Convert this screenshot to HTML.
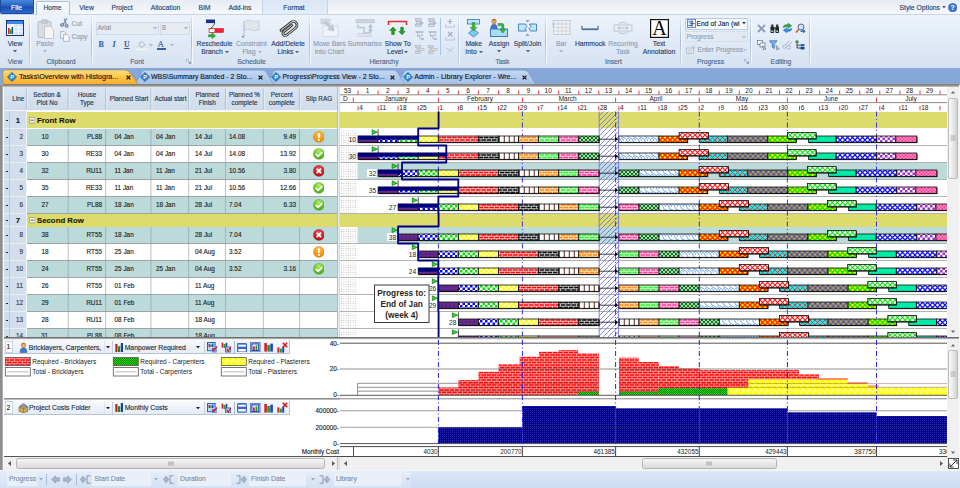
<!DOCTYPE html>
<html><head><meta charset="utf-8"><title>Tasks</title>
<style>
*{box-sizing:border-box;margin:0;padding:0}
html,body{width:960px;height:488px;overflow:hidden;background:#d5e3f5}
body{position:relative;font-family:"Liberation Sans",sans-serif;font-size:6.8px;color:#263f68}
.a{position:absolute}
.t{position:absolute;white-space:nowrap;line-height:10px;-webkit-text-stroke:.13px currentColor}
.c{text-align:center;transform:translateX(-50%)}
.g{color:#8d9db3}
#tabrow{left:0;top:0;width:960px;height:14px;background:linear-gradient(#e7ecf4,#eef2f8 50%,#f6f8fc)}
#ribbon{left:0;top:14px;width:960px;height:54.5px;background:linear-gradient(#edf3fb 0%,#e2ebf7 45%,#d6e2f2 100%);border-top:1px solid #c6d5e9;border-bottom:1.5px solid #b4c6e0}
.sep{position:absolute;top:17px;width:1px;height:47px;background:linear-gradient(rgba(160,180,210,.2),#a9bcd8 50%,rgba(160,180,210,.3));box-shadow:1px 0 0 rgba(255,255,255,.7)}
.gl{-webkit-text-stroke:.13px currentColor;position:absolute;top:56.5px;color:#4b6486;font-size:6.8px;line-height:10px;transform:translateX(-50%);white-space:nowrap}
.bl{position:absolute;font-size:6.8px;line-height:8px;text-align:center;transform:translateX(-50%);white-space:nowrap;color:#1e395b}
#docs{left:0;top:68px;width:960px;height:17px;background:#86a7d8}
.tb{font-size:6.4px;color:#222}
</style></head>
<body>
<div id="tabrow" class="a"></div>
<div id="ribbon" class="a"></div>
<div class="a" style="left:0;top:0;width:34px;height:14px;background:linear-gradient(#4a86dc,#2561c6 45%,#1b50b0 55%,#2c68cc);border:1px solid #1c4a9c;border-top:0;border-radius:0 0 2px 2px"></div>
<div class="t c " style="left:16.5px;top:2.5px;color:#fff">File</div>
<div class="a" style="left:36px;top:1px;width:34px;height:14px;background:linear-gradient(#fafcfe,#e9f0f9);border:1px solid #a9bfdc;border-bottom:0;border-radius:2px 2px 0 0"></div>
<div class="t c " style="left:52.5px;top:2.7px;">Home</div>
<div class="t c " style="left:86.5px;top:2.7px;">View</div>
<div class="t c " style="left:122px;top:2.7px;">Project</div>
<div class="t c " style="left:165.5px;top:2.7px;">Allocation</div>
<div class="t c " style="left:204.5px;top:2.7px;">BIM</div>
<div class="t c " style="left:240px;top:2.7px;">Add-ins</div>
<div class="a" style="left:262px;top:0;width:66px;height:14px;background:linear-gradient(#d9e6f6,#e4edf8);border-left:1px solid #c3d3e8;border-right:1px solid #c3d3e8"></div>
<div class="t c " style="left:294px;top:2.7px;">Format</div>
<div class="t " style="left:899.5px;top:2.9000000000000004px;">Style Options</div>
<svg class="a" style="left:942px;top:6.0px" width="4" height="2.4" viewBox="0 0 4 2.4"><path d="M0 0H4L2 2.4Z" fill="#4b6486"/></svg>
<svg class="a" style="left:948px;top:2.5px" width="9.4" height="9.4" viewBox="0 0 9.4 9.4"><circle cx="4.7" cy="4.7" r="4.1" fill="#3a78d8" stroke="#1b4a9a" stroke-width=".6"/><text x="4.7" y="7.3" font-size="7" font-weight="bold" font-family="Liberation Sans,sans-serif" fill="#fff" text-anchor="middle">?</text></svg>
<div class="sep" style="left:29px"></div>
<div class="sep" style="left:91px"></div>
<div class="sep" style="left:191px"></div>
<div class="sep" style="left:308.5px"></div>
<div class="sep" style="left:457.5px"></div>
<div class="sep" style="left:545px"></div>
<div class="sep" style="left:680px"></div>
<div class="sep" style="left:749.5px"></div>
<div class="sep" style="left:809px"></div>
<div class="gl" style="left:15px">View</div>
<div class="gl" style="left:61px">Clipboard</div>
<div class="gl" style="left:137px">Font</div>
<div class="gl" style="left:251.5px">Schedule</div>
<div class="gl" style="left:384px">Hierarchy</div>
<div class="gl" style="left:502.5px">Task</div>
<div class="gl" style="left:613.5px">Insert</div>
<div class="gl" style="left:710.5px">Progress</div>
<div class="gl" style="left:781px">Editing</div>
<svg class="a" style="left:185.5px;top:59px" width="5" height="5" viewBox="0 0 5 5"><path d="M0 0H3M0 0V3M2 2L4.5 4.5M4.5 2.5V4.5H2.5" stroke="#7f93b0" fill="none" stroke-width=".8"/></svg>
<svg class="a" style="left:743.5px;top:59px" width="5" height="5" viewBox="0 0 5 5"><path d="M0 0H3M0 0V3M2 2L4.5 4.5M4.5 2.5V4.5H2.5" stroke="#7f93b0" fill="none" stroke-width=".8"/></svg>
<svg class="a" style="left:6px;top:20px" width="18" height="16" viewBox="0 0 18 16"><rect x=".5" y=".5" width="17" height="15" fill="#fff" stroke="#1e2f80"/><rect x="1" y="1" width="16" height="3" fill="#3a8ae8"/><rect x="1" y="4" width="7" height="11" fill="#f4f8ff"/><rect x="2" y="8" width="1.7" height="6" fill="#d22"/><rect x="3.9" y="9.5" width="1.7" height="4.5" fill="#2a2"/><rect x="5.6" y="7" width="1.6" height="7" fill="#2448b0"/><rect x="8" y="4" width="9" height="11" fill="#cfe4fb"/><path d="M8 4V15M8 7.5H17M8 11H17M12.5 4V15" stroke="#fff" stroke-width=".8"/></svg>
<div class="t c " style="left:15px;top:38.9px;">View</div>
<svg class="a" style="left:13px;top:50.3px" width="4" height="2.4" viewBox="0 0 4 2.4"><path d="M0 0H4L2 2.4Z" fill="#4b6486"/></svg>
<svg class="a" style="left:37px;top:19px" width="18" height="20" viewBox="0 0 18 20"><rect x="1" y="2.5" width="13" height="16" rx="1" fill="#d9dde3" stroke="#b7bcc6"/><rect x="4.5" y=".8" width="6" height="3.5" rx="1" fill="#c9ced6" stroke="#aab0bb" stroke-width=".6"/><path d="M7.5 7.5H13.5L16.5 10.5V19.5H7.5Z" fill="#f4f5f7" stroke="#b9bec8" stroke-width=".8"/></svg>
<div class="t c g" style="left:45px;top:38.9px;">Paste</div>
<svg class="a" style="left:43px;top:50.3px" width="4" height="2.4" viewBox="0 0 4 2.4"><path d="M0 0H4L2 2.4Z" fill="#a9b6c8"/></svg>
<svg class="a" style="left:60px;top:18px" width="9" height="10" viewBox="0 0 9 10"><path d="M7 .3L3.2 6.2M4.2 .6L6.2 6" stroke="#8094b4" stroke-width="1.3" fill="none"/><ellipse cx="2.2" cy="7" rx="1.7" ry="1.4" fill="#a9b8d0" stroke="#5f7aa8" stroke-width=".9"/><ellipse cx="6.6" cy="7.8" rx="1.5" ry="1.6" fill="#a9b8d0" stroke="#5f7aa8" stroke-width=".9"/></svg>
<div class="t g" style="left:71.5px;top:18.5px;">Cut</div>
<svg class="a" style="left:60px;top:31px" width="10" height="11" viewBox="0 0 10 11"><path d="M.6 .6H4.2L6 2.4V7.4H.6Z" fill="#f2f4f8" stroke="#9aa7ba" stroke-width=".8"/><path d="M3.6 3.6H7.2L9.2 5.6V10.4H3.6Z" fill="#f8f9fb" stroke="#9aa7ba" stroke-width=".8"/></svg>
<div class="t g" style="left:71.5px;top:31.700000000000003px;">Copy</div>
<div class="a" style="left:95.5px;top:22px;width:63px;height:12.5px;background:#e6ebf2;border:1px solid #d0dbea"></div>
<div class="a" style="left:160px;top:22px;width:29.5px;height:12.5px;background:#e6ebf2;border:1px solid #d0dbea"></div>
<div class="t g" style="left:97.5px;top:23.3px;color:#8a96a8">Arial</div>
<svg class="a" style="left:153px;top:27.3px" width="4" height="2.4" viewBox="0 0 4 2.4"><path d="M0 0H4L2 2.4Z" fill="#a9b6c8"/></svg>
<div class="t g" style="left:162px;top:23.3px;color:#8a96a8">8</div>
<svg class="a" style="left:183.5px;top:27.3px" width="4" height="2.4" viewBox="0 0 4 2.4"><path d="M0 0H4L2 2.4Z" fill="#a9b6c8"/></svg>
<div class="t " style="left:98.5px;top:40px;font-family:'Liberation Serif',serif;font-weight:bold;font-size:8px;color:#3f5f93">B</div>
<div class="t " style="left:112.5px;top:40px;font-family:'Liberation Serif',serif;font-style:italic;font-weight:bold;font-size:8px;color:#3f5f93">I</div>
<div class="t " style="left:124px;top:40px;font-family:'Liberation Serif',serif;font-weight:bold;font-size:7.6px;color:#3f5f93;text-decoration:underline">U</div>
<svg class="a" style="left:136px;top:40px" width="11" height="10" viewBox="0 0 11 10"><path d="M3 3.5L6 1.5L9 5L5 7.5Z" fill="#e8ecf2" stroke="#9aa9c0" stroke-width=".8"/><path d="M2 5.5Q1 7 2 7.5Q3 7 2 5.5" fill="#a9b6c8"/><rect x=".5" y="8.6" width="10" height="1.4" fill="#f7f7f2"/></svg>
<svg class="a" style="left:149px;top:44.3px" width="4" height="2.4" viewBox="0 0 4 2.4"><path d="M0 0H4L2 2.4Z" fill="#a9b6c8"/></svg>
<div class="t " style="left:157.5px;top:39.2px;font-family:'Liberation Serif',serif;font-size:9px;color:#3f5f93">A</div>
<div class="a" style="left:156.5px;top:48.2px;width:9.5px;height:1.6px;background:#3a5ea8"></div>
<svg class="a" style="left:169.5px;top:44.3px" width="4" height="2.4" viewBox="0 0 4 2.4"><path d="M0 0H4L2 2.4Z" fill="#a9b6c8"/></svg>
<svg class="a" style="left:205px;top:18px" width="21" height="21" viewBox="0 0 21 21"><rect x="1" y="1.5" width="9" height="3.6" fill="#1a2f8f"/><path d="M9.5 3.2V6L4.5 12.5" stroke="#333" stroke-width=".8" fill="none"/><rect x="4" y="10.5" width="14.5" height="4" fill="#e23" stroke="#b11" stroke-width=".5"/><rect x="4.5" y="11" width="5" height="3" fill="#fff"/><path d="M3.5 16.8H7V15L10.5 17.8L7 20.6V18.8H3.5Z" fill="#2bb32b" stroke="#187a18" stroke-width=".5"/></svg>
<div class="t c " style="left:214.5px;top:38.9px;">Reschedule</div>
<div class="t c " style="left:212px;top:47.0px;">Branch</div>
<svg class="a" style="left:224.5px;top:50.8px" width="4" height="2.4" viewBox="0 0 4 2.4"><path d="M0 0H4L2 2.4Z" fill="#4b6486"/></svg>
<svg class="a" style="left:241px;top:18px" width="22" height="21" viewBox="0 0 22 21"><path d="M3 19.5V3" stroke="#b9c0cc" stroke-width="1.2"/><path d="M3.5 3.5Q7 1 10.5 3Q14 5 18 2.5V11.5Q14 14 10.5 12Q7 10 3.5 12.5Z" fill="#e3e6eb" stroke="#c3c9d3" stroke-width=".8"/><rect x="1" y="18" width="1.4" height="1.4" fill="#5570a0"/></svg>
<div class="t c g" style="left:251.5px;top:38.9px;">Constraint</div>
<div class="t c g" style="left:249px;top:47.0px;">Flag</div>
<svg class="a" style="left:257.5px;top:50.8px" width="4" height="2.4" viewBox="0 0 4 2.4"><path d="M0 0H4L2 2.4Z" fill="#a9b6c8"/></svg>
<svg class="a" style="left:277px;top:17px" width="22" height="22" viewBox="0 0 22 22"><g transform="rotate(-38 11 11)" fill="none" stroke-linecap="round"><path d="M4 8.5H17A3.6 3.6 0 0 1 17 15.7H5.5A2.2 2.2 0 0 1 5.5 11.3H15.5" stroke="#222" stroke-width="2.6"/><path d="M4 8.5H17A3.6 3.6 0 0 1 17 15.7H5.5A2.2 2.2 0 0 1 5.5 11.3H15.5" stroke="#d8d8d8" stroke-width="1"/></g></svg>
<div class="t c " style="left:288px;top:38.9px;">Add/Delete</div>
<div class="t c " style="left:285.5px;top:47.0px;">Links</div>
<svg class="a" style="left:295px;top:50.8px" width="4" height="2.4" viewBox="0 0 4 2.4"><path d="M0 0H4L2 2.4Z" fill="#4b6486"/></svg>
<svg class="a" style="left:320px;top:18px" width="20" height="20" viewBox="0 0 20 20"><rect x="3" y="8" width="15" height="10.5" fill="#f1f3f6" stroke="#cfd5de" stroke-width=".8"/><rect x="1" y="1" width="9" height="5" fill="#d5dae2" stroke="#c2c8d2" stroke-width=".6"/><path d="M4 5L9.5 9.5L7.5 11.5L14 13L12.5 6.5L10.8 8.2L6 3.5Z" fill="#c5cbd6" stroke="#aeb6c3" stroke-width=".6"/></svg>
<div class="t c g" style="left:329.5px;top:38.9px;">Move Bars</div>
<div class="t c g" style="left:329.5px;top:47.0px;">into Chart</div>
<svg class="a" style="left:355px;top:18px" width="21" height="20" viewBox="0 0 21 20"><rect x="1" y="1.5" width="18.5" height="3.4" fill="#cdd3dd" stroke="#b9c1cd" stroke-width=".6"/><path d="M3 6.5V9.5H9V15H15" stroke="#b9c1cd" stroke-width="1.3" fill="none"/><rect x="3" y="15.5" width="13" height="3" fill="#dfe3ea" stroke="#c5ccd7" stroke-width=".6"/><path d="M15.5 6L17.8 9.2H16.4V11.8H17.8L15.5 15L13.2 11.8H14.6V9.2H13.2Z" fill="#b3bccb"/></svg>
<div class="t c g" style="left:365px;top:38.9px;">Summarise</div>
<svg class="a" style="left:387px;top:19px" width="21" height="18" viewBox="0 0 21 18"><path d="M1.5 6V2.5H19.5V6" stroke="#e03030" stroke-width="1.6" fill="none"/><path d="M6 8L9.2 11.4H7.3V15.5H4.7V11.4H2.8Z" fill="#1fa01f" stroke="#0f700f" stroke-width=".5"/><path d="M15 15.8L11.8 12.4H13.7V8.3H16.3V12.4H18.2Z" fill="#1fa01f" stroke="#0f700f" stroke-width=".5"/></svg>
<div class="t c " style="left:397.7px;top:38.9px;">Show To</div>
<div class="t c " style="left:395px;top:47.0px;">Level</div>
<svg class="a" style="left:403.5px;top:50.8px" width="4" height="2.4" viewBox="0 0 4 2.4"><path d="M0 0H4L2 2.4Z" fill="#4b6486"/></svg>
<svg class="a" style="left:414.5px;top:18.3px" width="10" height="9" viewBox="0 0 10 9"><rect x=".5" y=".4" width="6" height="2" fill="#d6dbe4" stroke="#a3afc2" stroke-width=".6"/><rect x="1.2" y="3.4" width="5" height="2" fill="#d6dbe4" stroke="#a3afc2" stroke-width=".6"/><rect x=".5" y="6.4" width="6" height="2" fill="#d6dbe4" stroke="#a3afc2" stroke-width=".6"/><path d="M5.5 3L8.8 5L5.5 7Z" fill="#a9b4c6"/></svg>
<svg class="a" style="left:427.8px;top:18.3px" width="10" height="9" viewBox="0 0 10 9"><rect x=".5" y=".4" width="6" height="2" fill="#d6dbe4" stroke="#a3afc2" stroke-width=".6"/><rect x="1.2" y="3.4" width="5" height="2" fill="#d6dbe4" stroke="#a3afc2" stroke-width=".6"/><rect x=".5" y="6.4" width="6" height="2" fill="#d6dbe4" stroke="#a3afc2" stroke-width=".6"/><path d="M5.5 3L8.8 5L5.5 7Z" fill="#a9b4c6"/></svg>
<svg class="a" style="left:414.5px;top:31.1px" width="10" height="9" viewBox="0 0 10 9"><path d="M.5 1H8.5M2 4.8H5M5.5 8H9" stroke="#a9b4c6" stroke-width="1.4" fill="none"/><path d="M2.5 1.5V4.5M5 5V8" stroke="#a9b4c6" stroke-width=".8"/><path d="M6.5 2L8.5 4.5L6 5.5Z" fill="#b4bed0"/></svg>
<svg class="a" style="left:427.8px;top:31.1px" width="10" height="9" viewBox="0 0 10 9"><path d="M.5 1H8.5M2 4.8H5M5.5 8H9" stroke="#a9b4c6" stroke-width="1.4" fill="none"/><path d="M2.5 1.5V4.5M5 5V8" stroke="#a9b4c6" stroke-width=".8"/><path d="M6.5 2L8.5 4.5L6 5.5Z" fill="#b4bed0"/></svg>
<svg class="a" style="left:414.5px;top:44.7px" width="10" height="9" viewBox="0 0 10 9"><rect x=".5" y=".4" width="5" height="2" fill="#d6dbe4" stroke="#a3afc2" stroke-width=".6"/><rect x="3.5" y="3.4" width="5.5" height="2" fill="#e4e2d4" stroke="#b0b4b8" stroke-width=".6"/><rect x=".5" y="6.4" width="5" height="2" fill="#d6dbe4" stroke="#a3afc2" stroke-width=".6"/><path d="M2 2.5V6.4" stroke="#a3afc2" stroke-width=".8"/></svg>
<svg class="a" style="left:427.8px;top:44.7px" width="10" height="9" viewBox="0 0 10 9"><rect x=".5" y=".4" width="5" height="2" fill="#d6dbe4" stroke="#a3afc2" stroke-width=".6"/><rect x="3.5" y="3.4" width="5.5" height="2" fill="#e4e2d4" stroke="#b0b4b8" stroke-width=".6"/><rect x=".5" y="6.4" width="5" height="2" fill="#d6dbe4" stroke="#a3afc2" stroke-width=".6"/><path d="M2 2.5V6.4" stroke="#a3afc2" stroke-width=".8"/></svg>
<div class="a" style="left:440px;top:18px;width:1px;height:36.5px;background:#a9c4ee"></div>
<svg class="a" style="left:445px;top:18px" width="10" height="10" viewBox="0 0 10 10"><path d="M.5 6.5V9H9.5V6.5" stroke="#b2bccb" fill="none" stroke-width=".9"/><path d="M5 1V6M2.5 3.5H7.5" stroke="#9fb0c8" stroke-width="1.2"/></svg>
<svg class="a" style="left:445px;top:31px" width="10" height="10" viewBox="0 0 10 10"><path d="M.5 6.5V9H9.5V6.5" stroke="#b2bccb" fill="none" stroke-width=".9"/><path d="M3 1L7.5 5.5M7.5 1L3 5.5" stroke="#9fb0c8" stroke-width="1.2"/></svg>
<svg class="a" style="left:445px;top:46px" width="10" height="8" viewBox="0 0 10 8"><path d="M1 2L5 4L9 1.5M3 6.5L5 4L8 6.5" stroke="#c2cad6" fill="none" stroke-width="1"/></svg>
<svg class="a" style="left:464px;top:18px" width="20" height="20" viewBox="0 0 20 20"><rect x="3.5" y="1.5" width="12" height="4.5" fill="#bfe6f7" stroke="#3b78c0" stroke-width=".8"/><path d="M9.5 11L14.5 15L9.5 19L4.5 15Z" fill="#7ecbf0" stroke="#3b78c0" stroke-width=".8"/><path d="M8.2 4.5H10.8V9.5H12.8L9.5 13L6.2 9.5H8.2Z" fill="#38b838" stroke="#1a7a1a" stroke-width=".5"/></svg>
<div class="t c " style="left:473.7px;top:38.9px;">Make</div>
<div class="t c " style="left:471px;top:47.0px;">Into</div>
<svg class="a" style="left:478.5px;top:50.8px" width="4" height="2.4" viewBox="0 0 4 2.4"><path d="M0 0H4L2 2.4Z" fill="#4b6486"/></svg>
<svg class="a" style="left:489px;top:18px" width="20" height="20" viewBox="0 0 20 20"><rect x="1.5" y="11" width="17" height="7.5" fill="#a8dcf5" stroke="#2f6cb8" stroke-width=".9"/><circle cx="5" cy="3.4" r="2.3" fill="#e8a45a" stroke="#a8641e" stroke-width=".5"/><path d="M2.5 2.6Q5 -.5 7.5 2.6Q5 1.5 2.5 2.6" fill="#a85a14"/><path d="M1.8 10.5Q1.8 6.2 5 6.2Q8.2 6.2 8.2 10.5Z" fill="#3d78c8" stroke="#2a55a0" stroke-width=".5"/><path d="M9 5.5H13.2Q14.8 5.5 14.8 7.2V11.5H16.6L13.8 15L11 11.5H12.8V7.6H9Z" fill="#38b838" stroke="#1a7a1a" stroke-width=".5"/></svg>
<div class="t c " style="left:499px;top:38.9px;">Assign</div>
<svg class="a" style="left:497px;top:50.3px" width="4" height="2.4" viewBox="0 0 4 2.4"><path d="M0 0H4L2 2.4Z" fill="#4b6486"/></svg>
<svg class="a" style="left:517px;top:19px" width="21" height="18" viewBox="0 0 21 18"><path d="M1.5 5H8.5L10 7.5L8 9.5L9.5 12H1.5Z" fill="#bfe6f7" stroke="#2f6cb8" stroke-width=".8"/><path d="M12.5 5H19.5V12H13.5L12 9.5L14 7.5Z" fill="#bfe6f7" stroke="#2f6cb8" stroke-width=".8"/><path d="M8.3 1H12.7L10.5 3.8Z" fill="#9aa6b8"/><path d="M8.3 17H12.7L10.5 14.2Z" fill="#9aa6b8"/></svg>
<div class="t c " style="left:527.5px;top:38.9px;">Split/Join</div>
<svg class="a" style="left:525.5px;top:50.3px" width="4" height="2.4" viewBox="0 0 4 2.4"><path d="M0 0H4L2 2.4Z" fill="#4b6486"/></svg>
<svg class="a" style="left:552px;top:19px" width="19" height="17" viewBox="0 0 19 17"><rect x="1.5" y="1.5" width="16.5" height="14" fill="#f1f2f5" stroke="#bcc3cf" stroke-width=".8"/><path d="M1.5 5H18M1.5 8.5H18M1.5 12H18M6 1.5V15.5M10 1.5V15.5M14 1.5V15.5" stroke="#c6ccd6" stroke-width=".7"/><path d="M.5 3L3.5 5.5L.5 8Z" fill="#c0c7d2"/></svg>
<div class="t c g" style="left:561.2px;top:38.9px;">Bar</div>
<svg class="a" style="left:559.2px;top:50.3px" width="4" height="2.4" viewBox="0 0 4 2.4"><path d="M0 0H4L2 2.4Z" fill="#a9b6c8"/></svg>
<svg class="a" style="left:581px;top:24px" width="18" height="8" viewBox="0 0 18 8"><path d="M1 1.8V5.6H17V1.8" stroke="#2c4a72" fill="none" stroke-width="1"/><path d="M1.5 4.2H16.5V5.4H1.5Z" fill="#6a8ab0"/></svg>
<div class="t c " style="left:590.2px;top:38.9px;">Hammock</div>
<svg class="a" style="left:613px;top:21px" width="20" height="14" viewBox="0 0 20 14"><ellipse cx="10" cy="7" rx="6.5" ry="5.6" fill="none" stroke="#b5c0d0" stroke-width=".9"/><rect x="1" y="4" width="18" height="6" fill="#e9edf3" stroke="#b5c0d0" stroke-width=".8"/><path d="M5 7H15M13 5.5L15 7L13 8.5M7 5.5L5 7L7 8.5" stroke="#9fb0c8" fill="none" stroke-width=".7"/></svg>
<div class="t c g" style="left:623px;top:38.9px;">Recurring</div>
<div class="t c g" style="left:623px;top:47.0px;">Task</div>
<svg class="a" style="left:650px;top:18.5px" width="19" height="19" viewBox="0 0 19 19"><rect x=".6" y=".6" width="17.8" height="17.8" fill="#fff" stroke="#111" stroke-width="1.2"/><text x="9.5" y="16" font-family="Liberation Serif,serif" font-size="20" text-anchor="middle" fill="#000">A</text></svg>
<div class="t c " style="left:659px;top:38.9px;">Text</div>
<div class="t c " style="left:659px;top:47.0px;">Annotation</div>
<div class="a" style="left:684.5px;top:17.5px;width:63.5px;height:12px;background:#f8fbfe;border:1px solid #b9cbe6"></div>
<svg class="a" style="left:686.5px;top:19px" width="9" height="9" viewBox="0 0 9 9"><rect x=".4" y=".4" width="8.2" height="8.2" fill="#eaf2fc" stroke="#4b74b8" stroke-width=".8"/><path d="M1.5 2.8H6M3 4.6H7.5M1.5 6.4H6M5 1.5V7.5" stroke="#1d3f86" stroke-width=".8"/></svg>
<div class="t " style="left:696.5px;top:18.5px;color:#0d1f3f">End of Jan (wi</div>
<svg class="a" style="left:742px;top:22.3px" width="4" height="2.4" viewBox="0 0 4 2.4"><path d="M0 0H4L2 2.4Z" fill="#33496b"/></svg>
<div class="a" style="left:684.5px;top:31px;width:63.5px;height:11px;background:linear-gradient(90deg,#e9eef5,#e1e8f1);border:1px solid #d5deeb"></div>
<div class="t g" style="left:686.5px;top:31.799999999999997px;">Progress</div>
<svg class="a" style="left:742px;top:35.599999999999994px" width="4" height="2.4" viewBox="0 0 4 2.4"><path d="M0 0H4L2 2.4Z" fill="#b3bfd0"/></svg>
<svg class="a" style="left:686px;top:45px" width="10" height="9" viewBox="0 0 10 9"><rect x=".5" y="3" width="7" height="5.5" fill="#e6eaf0" stroke="#aab4c4" stroke-width=".7"/><path d="M2 5H6M2 6.8H6" stroke="#b8c1cf" stroke-width=".6"/><path d="M7.5 .5L9.5 2.5H8.3V5H6.7V2.5H5.5Z" fill="#b8c1cf"/></svg>
<div class="t g" style="left:697.5px;top:44.8px;">Enter Progress</div>
<svg class="a" style="left:742.5px;top:48.8px" width="4" height="2.4" viewBox="0 0 4 2.4"><path d="M0 0H4L2 2.4Z" fill="#b3bfd0"/></svg>
<svg class="a" style="left:756.5px;top:23.5px" width="9" height="9" viewBox="0 0 9 9"><path d="M1 1L8 8M8 1L1 8" stroke="#8a9ab5" stroke-width="1.8"/></svg>
<svg class="a" style="left:769.5px;top:23.5px" width="9.5" height="9.5" viewBox="0 0 9.5 9.5"><rect x=".5" y="2.5" width="3.6" height="6.5" rx=".8" fill="#222"/><rect x="5.4" y="2.5" width="3.6" height="6.5" rx=".8" fill="#222"/><rect x="1.2" y=".5" width="2.2" height="3" fill="#333"/><rect x="6.1" y=".5" width="2.2" height="3" fill="#333"/><rect x="3.8" y="3.5" width="2" height="2" fill="#444"/><rect x="1.2" y="6.4" width="2" height="1.6" fill="#9cc"/><rect x="6.2" y="6.4" width="2" height="1.6" fill="#9cc"/></svg>
<svg class="a" style="left:781.5px;top:23px" width="11" height="10" viewBox="0 0 11 10"><path d="M1 4.5Q1.5 1.2 6 1.5V.2L9.8 2.8L6 5.2V3.8Q3.5 3.6 1 4.5Z" fill="#2fa84a" stroke="#17702c" stroke-width=".4"/><path d="M10 5.5Q9.5 8.8 5 8.5V9.8L1.2 7.2L5 4.8V6.2Q7.5 6.4 10 5.5Z" fill="#3a8ae0" stroke="#1d57a8" stroke-width=".4"/></svg>
<svg class="a" style="left:795px;top:23px" width="11" height="11" viewBox="0 0 11 11"><circle cx="6" cy="4" r="3" fill="#cfe2fa" stroke="#5a6b8a" stroke-width="1"/><path d="M3.8 6.2L1 9.5" stroke="#c8641e" stroke-width="1.6"/><path d="M5.5 7.5H8V6L10.8 8.3L8 10.6V9.1H5.5Z" fill="#2d6fd8"/></svg>
<svg class="a" style="left:756.5px;top:40px" width="10" height="10" viewBox="0 0 10 10"><rect x=".5" y=".5" width="5" height="4" fill="#fff" stroke="#5a6b8a" stroke-width=".7"/><rect x="3" y="3" width="5" height="4" fill="#fff" stroke="#5a6b8a" stroke-width=".7"/><path d="M5.5 5.5L9 9L7.3 8.9L6.6 10Z" fill="#fff" stroke="#333" stroke-width=".5"/></svg>
<svg class="a" style="left:769px;top:40px" width="11" height="10" viewBox="0 0 11 10"><path d="M.5 .8H8L5.2 4.3V8.5L3.3 7.2V4.3Z" fill="#7db4f0" stroke="#2c5fae" stroke-width=".7"/><path d="M7 5.5L10.2 8.8L8.7 8.8L8 10Z" fill="#fff" stroke="#333" stroke-width=".5"/></svg>
<svg class="a" style="left:781.5px;top:40px" width="11" height="10" viewBox="0 0 11 10"><circle cx="2.5" cy="6.5" r="1.8" fill="none" stroke="#a4afc2" stroke-width=".8"/><circle cx="6.8" cy="7.3" r="1.8" fill="none" stroke="#a4afc2" stroke-width=".8"/><path d="M3.5 5L7 .8M5.8 5.8L9.8 2.2" stroke="#a4afc2" stroke-width=".9"/></svg>
<svg class="a" style="left:795px;top:40px" width="11" height="10" viewBox="0 0 11 10"><rect x=".5" y=".5" width="3" height="2.5" fill="#2a9a3a"/><path d="M2 3V8H5.5M2 5.2H5.5" stroke="#223" fill="none" stroke-width=".8"/><rect x="5.5" y="4" width="4" height="2.4" fill="#2d5fc0"/><rect x="5.5" y="7" width="4" height="2.4" fill="#1d3f86"/></svg>
<div id="docs" class="a"></div>
<svg class="a" style="left:0px;top:67px" width="960" height="18" viewBox="0 0 960 18"><defs><linearGradient id="og" x1="0" y1="0" x2="0" y2="1"><stop offset="0" stop-color="#ffe08a"/><stop offset=".45" stop-color="#ffc54a"/><stop offset="1" stop-color="#f7a928"/></linearGradient><linearGradient id="bg" x1="0" y1="0" x2="0" y2="1"><stop offset="0" stop-color="#c4d8f3"/><stop offset="1" stop-color="#a3c0e8"/></linearGradient></defs><path d="M397 17.5 L404 5 Q405.5 3 408 3 H524 Q527 3 528.5 5.5 L536 17.5Z" fill="url(#bg)" stroke="#7493c4" stroke-width=".7"/><path d="M266 17.5 L273 5 Q274.5 3 277 3 H393 Q396 3 397.5 5.5 L405 17.5Z" fill="url(#bg)" stroke="#7493c4" stroke-width=".7"/><path d="M135 17.5 L142 5 Q143.5 3 146 3 H262 Q265 3 266.5 5.5 L274 17.5Z" fill="url(#bg)" stroke="#7493c4" stroke-width=".7"/><path d="M3 18V5Q3 3 5.5 3H124Q128 3 130 6L138.5 18Z" fill="url(#og)" stroke="#c78a2a" stroke-width=".7"/></svg>
<svg class="a" style="left:7px;top:72.3px" width="10" height="10" viewBox="0 0 10 10"><path d="M5 .3L9.7 5L5 9.7L.3 5Z" fill="#2f86c8" stroke="#1c5f9a" stroke-width=".5"/><text x="5" y="7.2" font-size="5.5" font-weight="bold" font-family="Liberation Sans,sans-serif" fill="#fff" text-anchor="middle">P</text></svg>
<div class="t " style="left:19px;top:72.3px;color:#101820;font-size:7.15px">Tasks\Overview with Histogra...</div>
<svg class="a" style="left:126.0px;top:75.0px" width="5" height="5" viewBox="0 0 5 5"><path d="M.6 .6L4.4 4.4M4.4 .6L.6 4.4" stroke="#111" stroke-width="1.2"/></svg>
<svg class="a" style="left:140px;top:72.3px" width="10" height="10" viewBox="0 0 10 10"><path d="M5 .3L9.7 5L5 9.7L.3 5Z" fill="#2f86c8" stroke="#1c5f9a" stroke-width=".5"/><text x="5" y="7.2" font-size="5.5" font-weight="bold" font-family="Liberation Sans,sans-serif" fill="#fff" text-anchor="middle">P</text></svg>
<div class="t " style="left:151px;top:72.3px;color:#101820;font-size:6.95px">WBS\Summary Banded - 2 Sto...</div>
<svg class="a" style="left:258.0px;top:75.0px" width="5" height="5" viewBox="0 0 5 5"><path d="M.6 .6L4.4 4.4M4.4 .6L.6 4.4" stroke="#111" stroke-width="1.2"/></svg>
<svg class="a" style="left:271px;top:72.3px" width="10" height="10" viewBox="0 0 10 10"><path d="M5 .3L9.7 5L5 9.7L.3 5Z" fill="#2f86c8" stroke="#1c5f9a" stroke-width=".5"/><text x="5" y="7.2" font-size="5.5" font-weight="bold" font-family="Liberation Sans,sans-serif" fill="#fff" text-anchor="middle">P</text></svg>
<div class="t " style="left:282.5px;top:72.3px;color:#101820;font-size:6.93px">Progress\Progress View - 2 Sto...</div>
<svg class="a" style="left:389.5px;top:75.0px" width="5" height="5" viewBox="0 0 5 5"><path d="M.6 .6L4.4 4.4M4.4 .6L.6 4.4" stroke="#111" stroke-width="1.2"/></svg>
<svg class="a" style="left:402.7px;top:72.3px" width="10" height="10" viewBox="0 0 10 10"><path d="M5 .3L9.7 5L5 9.7L.3 5Z" fill="#2f86c8" stroke="#1c5f9a" stroke-width=".5"/><text x="5" y="7.2" font-size="5.5" font-weight="bold" font-family="Liberation Sans,sans-serif" fill="#fff" text-anchor="middle">P</text></svg>
<div class="t " style="left:414.3px;top:72.3px;color:#101820;font-size:7.15px">Admin - Library Explorer - Wre...</div>
<svg class="a" style="left:521.5px;top:75.0px" width="5" height="5" viewBox="0 0 5 5"><path d="M.6 .6L4.4 4.4M4.4 .6L.6 4.4" stroke="#111" stroke-width="1.2"/></svg>
<div class="a" style="left:0;top:85px;width:4px;height:385px;background:linear-gradient(90deg,#8c8c8c 0,#909090 60%,#f4f4f4 68%,#fff)"></div>
<div class="a" style="left:3px;top:84px;width:956px;height:3px;background:linear-gradient(#7a7671,#a39f98 75%,#e8e8e8)"></div>
<div class="a" style="left:4px;top:87px;width:334px;height:251px;background:#fff"></div>
<div class="a" style="left:4px;top:87px;width:334px;height:24px;background:linear-gradient(#dbe5f2,#d0dcec);border-bottom:1px solid #f4f7fb"></div>
<div class="a" style="left:4px;top:111px;width:22px;height:227px;background:#d3deed"></div>
<div class="t c tb" style="left:18.4px;top:94px;color:#27313f">Line</div>
<div class="t c tb" style="left:47px;top:89.5px;color:#27313f">Section &amp;</div>
<div class="t c tb" style="left:47px;top:98px;color:#27313f">Plot No</div>
<div class="t c tb" style="left:87px;top:89.5px;color:#27313f">House</div>
<div class="t c tb" style="left:87px;top:98px;color:#27313f">Type</div>
<div class="t c tb" style="left:129px;top:94px;color:#27313f">Planned Start</div>
<div class="t c tb" style="left:170.5px;top:94px;color:#27313f">Actual start</div>
<div class="t c tb" style="left:207.3px;top:89.5px;color:#27313f">Planned</div>
<div class="t c tb" style="left:207.3px;top:98px;color:#27313f">Finish</div>
<div class="t c tb" style="left:244.5px;top:89.5px;color:#27313f">Planned %</div>
<div class="t c tb" style="left:244.5px;top:98px;color:#27313f">complete</div>
<div class="t c tb" style="left:281.8px;top:89.5px;color:#27313f">Percent</div>
<div class="t c tb" style="left:281.8px;top:98px;color:#27313f">complete</div>
<div class="t c tb" style="left:319px;top:94px;color:#27313f">Slip RAG</div>
<div class="a" style="left:27px;top:112px;width:311px;height:16px;background:#dddb6b"></div>
<svg class="a" style="left:28.7px;top:117.4px" width="6.4" height="6.4" viewBox="0 0 6.4 6.4"><rect x=".4" y=".4" width="5.6" height="5.6" rx=".6" fill="#f6f6f0" stroke="#8a8a7a" stroke-width=".7"/><path d="M1.6 3.2H4.8" stroke="#333" stroke-width=".8"/></svg>
<div class="t " style="left:37px;top:115.8px;font-size:7.8px;font-weight:bold;color:#1a1a0a">Front Row</div>
<div class="t c " style="left:18px;top:115.8px;font-size:7.8px;font-weight:bold;color:#1a1a1a">1</div>
<div class="a" style="left:5.5px;top:119.7px;width:2.2px;height:1.6px;background:#222"></div>
<div class="a" style="left:4px;top:128px;width:22px;height:1px;background:#e9eff7"></div>
<div class="a" style="left:27px;top:129px;width:311px;height:17px;background:#bddada;border-bottom:1px solid #9aa5a8"></div>
<div class="t tb" style="left:9px;top:132.1px;width:14px;text-align:right;color:#333">2</div>
<div class="t c tb" style="left:45px;top:132.1px;">10</div>
<div class="t tb" style="left:70px;top:132.1px;width:32px;text-align:right">PL88</div>
<div class="t tb" style="left:114.5px;top:132.1px;">04 Jan</div>
<div class="t tb" style="left:156px;top:132.1px;">04 Jan</div>
<div class="t tb" style="left:195px;top:132.1px;">14 Jul</div>
<div class="t tb" style="left:229px;top:132.1px;">14.08</div>
<div class="t tb" style="left:266px;top:132.1px;width:30px;text-align:right">9.49</div>
<svg class="a" style="left:312.6px;top:130.79999999999998px" width="11.8" height="11.8" viewBox="0 0 11 11"><defs><radialGradient id="ra" cx=".5" cy=".25" r=".8"><stop offset="0" stop-color="#ffc24a"/><stop offset=".6" stop-color="#f89a14"/><stop offset="1" stop-color="#e07c08"/></radialGradient></defs><circle cx="5.5" cy="5.5" r="5.1" fill="url(#ra)" stroke="#e08a12" stroke-width=".5"/><path d="M5.5 2.2V6.4" stroke="#fff" stroke-width="1.7"/><circle cx="5.5" cy="8.3" r=".95" fill="#fff"/></svg>
<div class="a" style="left:5.5px;top:136.7px;width:2.2px;height:1.6px;background:#222"></div>
<div class="a" style="left:4px;top:145px;width:22px;height:1px;background:#e9eff7"></div>
<div class="a" style="left:27px;top:146px;width:311px;height:17px;background:#fff;border-bottom:1px solid #9aa5a8"></div>
<div class="t tb" style="left:9px;top:149.1px;width:14px;text-align:right;color:#333">3</div>
<div class="t c tb" style="left:45px;top:149.1px;">30</div>
<div class="t tb" style="left:70px;top:149.1px;width:32px;text-align:right">RE33</div>
<div class="t tb" style="left:114.5px;top:149.1px;">04 Jan</div>
<div class="t tb" style="left:156px;top:149.1px;">04 Jan</div>
<div class="t tb" style="left:195px;top:149.1px;">14 Jul</div>
<div class="t tb" style="left:229px;top:149.1px;">14.08</div>
<div class="t tb" style="left:266px;top:149.1px;width:30px;text-align:right">13.92</div>
<svg class="a" style="left:312.6px;top:147.79999999999998px" width="11.8" height="11.8" viewBox="0 0 11 11"><defs><radialGradient id="rg" cx=".5" cy=".25" r=".8"><stop offset="0" stop-color="#b4ee62"/><stop offset=".6" stop-color="#62c524"/><stop offset="1" stop-color="#3d9a18"/></radialGradient></defs><circle cx="5.5" cy="5.5" r="5.1" fill="url(#rg)" stroke="#58ad2a" stroke-width=".5"/><path d="M2.5 5.4L4.7 7.6L8.6 3.9" stroke="#fff" stroke-width="1.7" fill="none"/></svg>
<div class="a" style="left:5.5px;top:153.7px;width:2.2px;height:1.6px;background:#222"></div>
<div class="a" style="left:4px;top:162px;width:22px;height:1px;background:#e9eff7"></div>
<div class="a" style="left:27px;top:163px;width:311px;height:17px;background:#bddada;border-bottom:1px solid #9aa5a8"></div>
<div class="t tb" style="left:9px;top:166.1px;width:14px;text-align:right;color:#333">4</div>
<div class="t c tb" style="left:45px;top:166.1px;">32</div>
<div class="t tb" style="left:70px;top:166.1px;width:32px;text-align:right">RU11</div>
<div class="t tb" style="left:114.5px;top:166.1px;">11 Jan</div>
<div class="t tb" style="left:156px;top:166.1px;">11 Jan</div>
<div class="t tb" style="left:195px;top:166.1px;">21 Jul</div>
<div class="t tb" style="left:229px;top:166.1px;">10.56</div>
<div class="t tb" style="left:266px;top:166.1px;width:30px;text-align:right">3.80</div>
<svg class="a" style="left:312.6px;top:164.79999999999998px" width="11.8" height="11.8" viewBox="0 0 11 11"><defs><radialGradient id="rr" cx=".5" cy=".25" r=".8"><stop offset="0" stop-color="#ee4a52"/><stop offset=".6" stop-color="#d51f2b"/><stop offset="1" stop-color="#a50f1a"/></radialGradient></defs><circle cx="5.5" cy="5.5" r="5.1" fill="url(#rr)" stroke="#a8141f" stroke-width=".5"/><path d="M3.4 3.4L7.6 7.6M7.6 3.4L3.4 7.6" stroke="#fff" stroke-width="1.8"/></svg>
<div class="a" style="left:5.5px;top:170.7px;width:2.2px;height:1.6px;background:#222"></div>
<div class="a" style="left:4px;top:179px;width:22px;height:1px;background:#e9eff7"></div>
<div class="a" style="left:27px;top:180px;width:311px;height:17px;background:#fff;border-bottom:1px solid #9aa5a8"></div>
<div class="t tb" style="left:9px;top:183.1px;width:14px;text-align:right;color:#333">5</div>
<div class="t c tb" style="left:45px;top:183.1px;">35</div>
<div class="t tb" style="left:70px;top:183.1px;width:32px;text-align:right">RE33</div>
<div class="t tb" style="left:114.5px;top:183.1px;">11 Jan</div>
<div class="t tb" style="left:156px;top:183.1px;">11 Jan</div>
<div class="t tb" style="left:195px;top:183.1px;">21 Jul</div>
<div class="t tb" style="left:229px;top:183.1px;">10.56</div>
<div class="t tb" style="left:266px;top:183.1px;width:30px;text-align:right">12.66</div>
<svg class="a" style="left:312.6px;top:181.79999999999998px" width="11.8" height="11.8" viewBox="0 0 11 11"><defs><radialGradient id="rg" cx=".5" cy=".25" r=".8"><stop offset="0" stop-color="#b4ee62"/><stop offset=".6" stop-color="#62c524"/><stop offset="1" stop-color="#3d9a18"/></radialGradient></defs><circle cx="5.5" cy="5.5" r="5.1" fill="url(#rg)" stroke="#58ad2a" stroke-width=".5"/><path d="M2.5 5.4L4.7 7.6L8.6 3.9" stroke="#fff" stroke-width="1.7" fill="none"/></svg>
<div class="a" style="left:5.5px;top:187.7px;width:2.2px;height:1.6px;background:#222"></div>
<div class="a" style="left:4px;top:196px;width:22px;height:1px;background:#e9eff7"></div>
<div class="a" style="left:27px;top:197px;width:311px;height:17px;background:#bddada;border-bottom:1px solid #9aa5a8"></div>
<div class="t tb" style="left:9px;top:200.1px;width:14px;text-align:right;color:#333">6</div>
<div class="t c tb" style="left:45px;top:200.1px;">27</div>
<div class="t tb" style="left:70px;top:200.1px;width:32px;text-align:right">PL88</div>
<div class="t tb" style="left:114.5px;top:200.1px;">18 Jan</div>
<div class="t tb" style="left:156px;top:200.1px;">18 Jan</div>
<div class="t tb" style="left:195px;top:200.1px;">28 Jul</div>
<div class="t tb" style="left:229px;top:200.1px;">7.04</div>
<div class="t tb" style="left:266px;top:200.1px;width:30px;text-align:right">6.33</div>
<svg class="a" style="left:312.6px;top:198.79999999999998px" width="11.8" height="11.8" viewBox="0 0 11 11"><defs><radialGradient id="rg" cx=".5" cy=".25" r=".8"><stop offset="0" stop-color="#b4ee62"/><stop offset=".6" stop-color="#62c524"/><stop offset="1" stop-color="#3d9a18"/></radialGradient></defs><circle cx="5.5" cy="5.5" r="5.1" fill="url(#rg)" stroke="#58ad2a" stroke-width=".5"/><path d="M2.5 5.4L4.7 7.6L8.6 3.9" stroke="#fff" stroke-width="1.7" fill="none"/></svg>
<div class="a" style="left:5.5px;top:204.7px;width:2.2px;height:1.6px;background:#222"></div>
<div class="a" style="left:4px;top:213px;width:22px;height:1px;background:#e9eff7"></div>
<div class="a" style="left:27px;top:214px;width:311px;height:13px;background:#dddb6b"></div>
<svg class="a" style="left:28.7px;top:217.4px" width="6.4" height="6.4" viewBox="0 0 6.4 6.4"><rect x=".4" y=".4" width="5.6" height="5.6" rx=".6" fill="#f6f6f0" stroke="#8a8a7a" stroke-width=".7"/><path d="M1.6 3.2H4.8" stroke="#333" stroke-width=".8"/></svg>
<div class="t " style="left:37px;top:215.8px;font-size:7.8px;font-weight:bold;color:#1a1a0a">Second Row</div>
<div class="t c " style="left:18px;top:215.8px;font-size:7.8px;font-weight:bold;color:#1a1a1a">7</div>
<div class="a" style="left:5.5px;top:219.7px;width:2.2px;height:1.6px;background:#222"></div>
<div class="a" style="left:4px;top:226px;width:22px;height:1px;background:#e9eff7"></div>
<div class="a" style="left:27px;top:227px;width:311px;height:17px;background:#bddada;border-bottom:1px solid #9aa5a8"></div>
<div class="t tb" style="left:9px;top:230.1px;width:14px;text-align:right;color:#333">8</div>
<div class="t c tb" style="left:45px;top:230.1px;">38</div>
<div class="t tb" style="left:70px;top:230.1px;width:32px;text-align:right">RT55</div>
<div class="t tb" style="left:114.5px;top:230.1px;">18 Jan</div>
<div class="t tb" style="left:156px;top:230.1px;"></div>
<div class="t tb" style="left:195px;top:230.1px;">28 Jul</div>
<div class="t tb" style="left:229px;top:230.1px;">7.04</div>
<div class="t tb" style="left:266px;top:230.1px;width:30px;text-align:right"></div>
<svg class="a" style="left:312.6px;top:228.79999999999998px" width="11.8" height="11.8" viewBox="0 0 11 11"><defs><radialGradient id="rr" cx=".5" cy=".25" r=".8"><stop offset="0" stop-color="#ee4a52"/><stop offset=".6" stop-color="#d51f2b"/><stop offset="1" stop-color="#a50f1a"/></radialGradient></defs><circle cx="5.5" cy="5.5" r="5.1" fill="url(#rr)" stroke="#a8141f" stroke-width=".5"/><path d="M3.4 3.4L7.6 7.6M7.6 3.4L3.4 7.6" stroke="#fff" stroke-width="1.8"/></svg>
<div class="a" style="left:5.5px;top:234.7px;width:2.2px;height:1.6px;background:#222"></div>
<div class="a" style="left:4px;top:243px;width:22px;height:1px;background:#e9eff7"></div>
<div class="a" style="left:27px;top:244px;width:311px;height:17px;background:#fff;border-bottom:1px solid #9aa5a8"></div>
<div class="t tb" style="left:9px;top:247.1px;width:14px;text-align:right;color:#333">9</div>
<div class="t c tb" style="left:45px;top:247.1px;">18</div>
<div class="t tb" style="left:70px;top:247.1px;width:32px;text-align:right">RT55</div>
<div class="t tb" style="left:114.5px;top:247.1px;">25 Jan</div>
<div class="t tb" style="left:156px;top:247.1px;"></div>
<div class="t tb" style="left:195px;top:247.1px;">04 Aug</div>
<div class="t tb" style="left:229px;top:247.1px;">3.52</div>
<div class="t tb" style="left:266px;top:247.1px;width:30px;text-align:right"></div>
<svg class="a" style="left:312.6px;top:245.79999999999998px" width="11.8" height="11.8" viewBox="0 0 11 11"><defs><radialGradient id="ra" cx=".5" cy=".25" r=".8"><stop offset="0" stop-color="#ffc24a"/><stop offset=".6" stop-color="#f89a14"/><stop offset="1" stop-color="#e07c08"/></radialGradient></defs><circle cx="5.5" cy="5.5" r="5.1" fill="url(#ra)" stroke="#e08a12" stroke-width=".5"/><path d="M5.5 2.2V6.4" stroke="#fff" stroke-width="1.7"/><circle cx="5.5" cy="8.3" r=".95" fill="#fff"/></svg>
<div class="a" style="left:5.5px;top:251.7px;width:2.2px;height:1.6px;background:#222"></div>
<div class="a" style="left:4px;top:260px;width:22px;height:1px;background:#e9eff7"></div>
<div class="a" style="left:27px;top:261px;width:311px;height:17px;background:#bddada;border-bottom:1px solid #9aa5a8"></div>
<div class="t tb" style="left:9px;top:264.1px;width:14px;text-align:right;color:#333">10</div>
<div class="t c tb" style="left:45px;top:264.1px;">24</div>
<div class="t tb" style="left:70px;top:264.1px;width:32px;text-align:right">RT55</div>
<div class="t tb" style="left:114.5px;top:264.1px;">25 Jan</div>
<div class="t tb" style="left:156px;top:264.1px;">25 Jan</div>
<div class="t tb" style="left:195px;top:264.1px;">04 Aug</div>
<div class="t tb" style="left:229px;top:264.1px;">3.52</div>
<div class="t tb" style="left:266px;top:264.1px;width:30px;text-align:right">3.16</div>
<svg class="a" style="left:312.6px;top:262.8px" width="11.8" height="11.8" viewBox="0 0 11 11"><defs><radialGradient id="rg" cx=".5" cy=".25" r=".8"><stop offset="0" stop-color="#b4ee62"/><stop offset=".6" stop-color="#62c524"/><stop offset="1" stop-color="#3d9a18"/></radialGradient></defs><circle cx="5.5" cy="5.5" r="5.1" fill="url(#rg)" stroke="#58ad2a" stroke-width=".5"/><path d="M2.5 5.4L4.7 7.6L8.6 3.9" stroke="#fff" stroke-width="1.7" fill="none"/></svg>
<div class="a" style="left:5.5px;top:268.7px;width:2.2px;height:1.6px;background:#222"></div>
<div class="a" style="left:4px;top:277px;width:22px;height:1px;background:#e9eff7"></div>
<div class="a" style="left:27px;top:278px;width:311px;height:17px;background:#fff;border-bottom:1px solid #9aa5a8"></div>
<div class="t tb" style="left:9px;top:281.1px;width:14px;text-align:right;color:#333">11</div>
<div class="t c tb" style="left:45px;top:281.1px;">26</div>
<div class="t tb" style="left:70px;top:281.1px;width:32px;text-align:right">RT55</div>
<div class="t tb" style="left:114.5px;top:281.1px;">01 Feb</div>
<div class="t tb" style="left:156px;top:281.1px;"></div>
<div class="t tb" style="left:195px;top:281.1px;">11 Aug</div>
<div class="t tb" style="left:229px;top:281.1px;"></div>
<div class="t tb" style="left:266px;top:281.1px;width:30px;text-align:right"></div>

<div class="a" style="left:5.5px;top:285.7px;width:2.2px;height:1.6px;background:#222"></div>
<div class="a" style="left:4px;top:294px;width:22px;height:1px;background:#e9eff7"></div>
<div class="a" style="left:27px;top:295px;width:311px;height:17px;background:#bddada;border-bottom:1px solid #9aa5a8"></div>
<div class="t tb" style="left:9px;top:298.1px;width:14px;text-align:right;color:#333">12</div>
<div class="t c tb" style="left:45px;top:298.1px;">29</div>
<div class="t tb" style="left:70px;top:298.1px;width:32px;text-align:right">RU11</div>
<div class="t tb" style="left:114.5px;top:298.1px;">01 Feb</div>
<div class="t tb" style="left:156px;top:298.1px;"></div>
<div class="t tb" style="left:195px;top:298.1px;">11 Aug</div>
<div class="t tb" style="left:229px;top:298.1px;"></div>
<div class="t tb" style="left:266px;top:298.1px;width:30px;text-align:right"></div>

<div class="a" style="left:5.5px;top:302.7px;width:2.2px;height:1.6px;background:#222"></div>
<div class="a" style="left:4px;top:311px;width:22px;height:1px;background:#e9eff7"></div>
<div class="a" style="left:27px;top:312px;width:311px;height:17px;background:#fff;border-bottom:1px solid #9aa5a8"></div>
<div class="t tb" style="left:9px;top:315.1px;width:14px;text-align:right;color:#333">13</div>
<div class="t c tb" style="left:45px;top:315.1px;">28</div>
<div class="t tb" style="left:70px;top:315.1px;width:32px;text-align:right">RU11</div>
<div class="t tb" style="left:114.5px;top:315.1px;">08 Feb</div>
<div class="t tb" style="left:156px;top:315.1px;"></div>
<div class="t tb" style="left:195px;top:315.1px;">18 Aug</div>
<div class="t tb" style="left:229px;top:315.1px;"></div>
<div class="t tb" style="left:266px;top:315.1px;width:30px;text-align:right"></div>

<div class="a" style="left:5.5px;top:319.7px;width:2.2px;height:1.6px;background:#222"></div>
<div class="a" style="left:4px;top:328px;width:22px;height:1px;background:#e9eff7"></div>
<div class="a" style="left:27px;top:329px;width:311px;height:9px;background:#bddada;border-bottom:1px solid #9aa5a8"></div>
<div class="a" style="left:4px;top:329px;width:334px;height:9px;overflow:hidden"><div class="t tb" style="left:5px;top:2.4px;width:14px;text-align:right;color:#333">14</div><div class="t tb" style="left:37px;top:2.4px">31</div><div class="t tb" style="left:66px;top:2.4px;width:32px;text-align:right">PL88</div><div class="t tb" style="left:110.5px;top:2.4px">08 Feb</div><div class="t tb" style="left:191px;top:2.4px">18 Aug</div></div>
<div class="a" style="left:5.5px;top:336.4px;width:2.2px;height:1.2px;background:#444"></div>
<div class="a" style="left:4px;top:337px;width:22px;height:1px;background:#e9eff7"></div>
<svg class="a" style="left:0;top:87px" width="340" height="251" viewBox="0 87 340 251"><path d="M68.2 129V213M68.2 227V338M105.6 129V213M105.6 227V338M150.9 129V213M150.9 227V338M188.6 129V213M188.6 227V338M225.5 129V213M225.5 227V338M263.3 129V213M263.3 227V338M299.5 129V213M299.5 227V338" stroke="#8a98a4" stroke-opacity=".55" stroke-width="1.1"/><path d="M26.3 88.5V109.5M68.2 88.5V109.5M105.6 88.5V109.5M150.9 88.5V109.5M188.6 88.5V109.5M225.5 88.5V109.5M263.3 88.5V109.5M299.5 88.5V109.5" stroke="#b4c2d6" stroke-width="1.1"/><path d="M27.400000000000002 88.5V109.5M69.3 88.5V109.5M106.69999999999999 88.5V109.5M152.0 88.5V109.5M189.7 88.5V109.5M226.6 88.5V109.5M264.40000000000003 88.5V109.5M300.6 88.5V109.5" stroke="#e9eff8" stroke-width=".8"/></svg>
<div class="a" style="left:8.5px;top:111px;width:1px;height:227px;background:#b9c6d8"></div>
<div class="a" style="left:25.5px;top:111px;width:1.5px;height:227px;background:#eef3f9"></div>
<div class="a" style="left:337px;top:87px;width:3px;height:251px;background:linear-gradient(90deg,#9aa4b5,#e6ebf2 50%,#c9d2df)"></div>
<svg class="a" style="left:340px;top:87px" width="607" height="251" viewBox="340 87 607 251" font-family="Liberation Sans,sans-serif">
<defs><pattern id="p_purple" width="4" height="4" patternUnits="userSpaceOnUse"><rect width="4" height="4" fill="#6a2d91"/><path d="M0 2H4M2 0V4" stroke="#4d1d70" stroke-width=".7"/></pattern><pattern id="p_blue" width="5.0" height="5.0" patternUnits="userSpaceOnUse"><rect width="5.0" height="5.0" fill="#fff"/><rect width="2.5" height="2.5" fill="#0a0aff"/><rect x="2.5" y="2.5" width="2.5" height="2.5" fill="#0a0aff"/></pattern><pattern id="p_green" width="5.0" height="5.0" patternUnits="userSpaceOnUse"><rect width="5.0" height="5.0" fill="#fff"/><rect width="2.5" height="2.5" fill="#08e008"/><rect x="2.5" y="2.5" width="2.5" height="2.5" fill="#08e008"/></pattern><pattern id="p_yellow" width="5.0" height="5.0" patternUnits="userSpaceOnUse"><rect width="5.0" height="5.0" fill="#ffffd0"/><rect width="2.5" height="2.5" fill="#ffff00"/><rect x="2.5" y="2.5" width="2.5" height="2.5" fill="#ffff00"/></pattern><pattern id="p_red" width="5.3" height="5" patternUnits="userSpaceOnUse"><rect width="5.3" height="5" fill="#ff0a0a"/><path d="M0 1.25H5.3M0 3.75H5.3M1.3 1.25V3.75M3.95 -1V1.25M3.95 3.75V6" stroke="#fff" stroke-width="0.68" fill="none"/></pattern><pattern id="p_black" width="5.3" height="5" patternUnits="userSpaceOnUse"><rect width="5.3" height="5" fill="#111"/><path d="M0 1.25H5.3M0 3.75H5.3M1.3 1.25V3.75M3.95 -1V1.25M3.95 3.75V6" stroke="#fff" stroke-width="0.68" fill="none"/></pattern><pattern id="p_vl" width="5" height="4" patternUnits="userSpaceOnUse"><rect width="5" height="4" fill="#fff"/><path d="M4.3 0V4" stroke="#6a3428" stroke-width="1.1"/></pattern><pattern id="p_orange" width="5.3" height="5" patternUnits="userSpaceOnUse"><rect width="5.3" height="5" fill="#ff8a10"/><path d="M0 1.25H5.3M0 3.75H5.3M1.3 1.25V3.75M3.95 -1V1.25M3.95 3.75V6" stroke="#fff" stroke-width="0.68" fill="none"/></pattern><pattern id="p_lgreen" width="5.3" height="5" patternUnits="userSpaceOnUse"><rect width="5.3" height="5" fill="#38f038"/><path d="M0 1.25H5.3M0 3.75H5.3M1.3 1.25V3.75M3.95 -1V1.25M3.95 3.75V6" stroke="#fff" stroke-width="0.68" fill="none"/></pattern><pattern id="p_pink" width="5.3" height="5" patternUnits="userSpaceOnUse"><rect width="5.3" height="5" fill="#ff3c9c"/><path d="M0 1.25H5.3M0 3.75H5.3M1.3 1.25V3.75M3.95 -1V1.25M3.95 3.75V6" stroke="#fff" stroke-width="0.68" fill="none"/></pattern><pattern id="p_dgreen" width="4" height="4" patternUnits="userSpaceOnUse"><rect width="4" height="4" fill="#0a7a1a"/><path d="M0 0L4 4M4 0L0 4" stroke="#d8f0d8" stroke-width="0.8"/></pattern><pattern id="p_lblue" width="6" height="6" patternUnits="userSpaceOnUse"><rect width="6" height="6" fill="#fff"/><path d="M0 0Q3 1 3 3T6 6M-3 3Q0 4 0 6M3 0Q6 1 6 3" stroke="#5aa0ff" stroke-width=".9" fill="none"/></pattern><pattern id="p_ox" width="5" height="5" patternUnits="userSpaceOnUse"><rect width="5" height="5" fill="#ffee00"/><path d="M0 0L5 5M5 0L0 5" stroke="#ff2800" stroke-width="1.45"/></pattern><pattern id="p_rx" width="5" height="5" patternUnits="userSpaceOnUse"><rect width="5" height="5" fill="#fff"/><path d="M0 0L5 5M5 0L0 5" stroke="#ff1a1a" stroke-width="1.2"/></pattern><pattern id="p_teal" width="5" height="5" patternUnits="userSpaceOnUse"><rect width="5" height="5" fill="#10f0f0"/><path d="M0 0L5 5M5 0L0 5" stroke="#f02828" stroke-width="0.85"/></pattern><pattern id="p_gray" width="1.24" height="1.24" patternUnits="userSpaceOnUse"><rect width="1.24" height="1.24" fill="#d8cc30"/><rect width="0.62" height="0.62" fill="#2a2ac8"/><rect x="0.62" y="0.62" width="0.62" height="0.62" fill="#2a2ac8"/></pattern><pattern id="p_lime" width="5" height="5" patternUnits="userSpaceOnUse"><rect width="5" height="5" fill="#ffff00"/><path d="M0 0L5 5M5 0L0 5" stroke="#18e000" stroke-width="1.45"/></pattern><pattern id="p_gx" width="5" height="5" patternUnits="userSpaceOnUse"><rect width="5" height="5" fill="#fff"/><path d="M0 0L5 5M5 0L0 5" stroke="#18e018" stroke-width="1.2"/></pattern><pattern id="p_aqua" width="5" height="5" patternUnits="userSpaceOnUse"><rect width="5" height="5" fill="#00f078"/><path d="M0 0L5 5M5 0L0 5" stroke="#00e8d0" stroke-width="1.2"/></pattern><pattern id="p_bx" width="5" height="5" patternUnits="userSpaceOnUse"><rect width="5" height="5" fill="#fff"/><path d="M0 0L5 5M5 0L0 5" stroke="#1414ff" stroke-width="1.25"/></pattern><pattern id="p_pchk" width="5.0" height="5.0" patternUnits="userSpaceOnUse"><rect width="5.0" height="5.0" fill="#fff"/><rect width="2.5" height="2.5" fill="#a030d0"/><rect x="2.5" y="2.5" width="2.5" height="2.5" fill="#a030d0"/></pattern><pattern id="p_pdot" width="1.4" height="1.4" patternUnits="userSpaceOnUse"><rect width="1.4" height="1.4" fill="#ffb4d6"/><path d="M-.35 .35L.35 -.35M0 1.4L1.4 0M1.05 1.75L1.75 1.05" stroke="#ff1c88" stroke-width=".7"/></pattern><pattern id="p_hol" width="5" height="5" patternUnits="userSpaceOnUse"><path d="M-1 6L6 -1M-1 1L1 -1M4 6L6 4" stroke="#4a4af2" stroke-width=".65"/></pattern><pattern id="p_dots" width="2.3" height="2.4" patternUnits="userSpaceOnUse"><rect x=".6" y=".7" width="1" height="1" fill="#bdbdbd"/></pattern></defs>
<rect x="340" y="87" width="607" height="251" fill="#fff"/>
<path d="M340 94.8H947M340 102.6H947" stroke="#8a8a8a" stroke-width="1"/>
<path d="M358.0 90.5V94.5M358.0 106V110.5M378.1 90.5V94.5M378.1 106V110.5M398.1 90.5V94.5M398.1 106V110.5M418.2 90.5V94.5M418.2 106V110.5M438.3 90.5V94.5M438.3 106V110.5M458.4 90.5V94.5M458.4 106V110.5M478.4 90.5V94.5M478.4 106V110.5M498.5 90.5V94.5M498.5 106V110.5M518.6 90.5V94.5M518.6 106V110.5M538.6 90.5V94.5M538.6 106V110.5M558.7 90.5V94.5M558.7 106V110.5M578.8 90.5V94.5M578.8 106V110.5M598.8 90.5V94.5M598.8 106V110.5M618.9 90.5V94.5M618.9 106V110.5M639.0 90.5V94.5M639.0 106V110.5M659.0 90.5V94.5M659.0 106V110.5M679.1 90.5V94.5M679.1 106V110.5M699.2 90.5V94.5M699.2 106V110.5M719.3 90.5V94.5M719.3 106V110.5M739.3 90.5V94.5M739.3 106V110.5M759.4 90.5V94.5M759.4 106V110.5M779.5 90.5V94.5M779.5 106V110.5M799.5 90.5V94.5M799.5 106V110.5M819.6 90.5V94.5M819.6 106V110.5M839.7 90.5V94.5M839.7 106V110.5M859.8 90.5V94.5M859.8 106V110.5M879.8 90.5V94.5M879.8 106V110.5M899.9 90.5V94.5M899.9 106V110.5M920.0 90.5V94.5M920.0 106V110.5M940.0 90.5V94.5M940.0 106V110.5" stroke="#ff2030" stroke-width=".9"/>
<text x="347.5" y="93.4" font-size="6.5" text-anchor="middle" fill="#222">53</text>
<text x="367.6" y="93.4" font-size="6.5" text-anchor="middle" fill="#222">1</text>
<text x="387.7" y="93.4" font-size="6.5" text-anchor="middle" fill="#222">2</text>
<text x="407.7" y="93.4" font-size="6.5" text-anchor="middle" fill="#222">3</text>
<text x="427.8" y="93.4" font-size="6.5" text-anchor="middle" fill="#222">4</text>
<text x="447.9" y="93.4" font-size="6.5" text-anchor="middle" fill="#222">5</text>
<text x="468.0" y="93.4" font-size="6.5" text-anchor="middle" fill="#222">6</text>
<text x="488.0" y="93.4" font-size="6.5" text-anchor="middle" fill="#222">7</text>
<text x="508.1" y="93.4" font-size="6.5" text-anchor="middle" fill="#222">8</text>
<text x="528.2" y="93.4" font-size="6.5" text-anchor="middle" fill="#222">9</text>
<text x="548.2" y="93.4" font-size="6.5" text-anchor="middle" fill="#222">10</text>
<text x="568.3" y="93.4" font-size="6.5" text-anchor="middle" fill="#222">11</text>
<text x="588.4" y="93.4" font-size="6.5" text-anchor="middle" fill="#222">12</text>
<text x="608.4" y="93.4" font-size="6.5" text-anchor="middle" fill="#222">13</text>
<text x="628.5" y="93.4" font-size="6.5" text-anchor="middle" fill="#222">14</text>
<text x="648.6" y="93.4" font-size="6.5" text-anchor="middle" fill="#222">15</text>
<text x="668.6" y="93.4" font-size="6.5" text-anchor="middle" fill="#222">16</text>
<text x="688.7" y="93.4" font-size="6.5" text-anchor="middle" fill="#222">17</text>
<text x="708.8" y="93.4" font-size="6.5" text-anchor="middle" fill="#222">18</text>
<text x="728.9" y="93.4" font-size="6.5" text-anchor="middle" fill="#222">19</text>
<text x="748.9" y="93.4" font-size="6.5" text-anchor="middle" fill="#222">20</text>
<text x="769.0" y="93.4" font-size="6.5" text-anchor="middle" fill="#222">21</text>
<text x="789.1" y="93.4" font-size="6.5" text-anchor="middle" fill="#222">22</text>
<text x="809.1" y="93.4" font-size="6.5" text-anchor="middle" fill="#222">23</text>
<text x="829.2" y="93.4" font-size="6.5" text-anchor="middle" fill="#222">24</text>
<text x="849.3" y="93.4" font-size="6.5" text-anchor="middle" fill="#222">25</text>
<text x="869.4" y="93.4" font-size="6.5" text-anchor="middle" fill="#222">26</text>
<text x="889.4" y="93.4" font-size="6.5" text-anchor="middle" fill="#222">27</text>
<text x="909.5" y="93.4" font-size="6.5" text-anchor="middle" fill="#222">28</text>
<text x="929.6" y="93.4" font-size="6.5" text-anchor="middle" fill="#222">29</text>
<text x="359.2" y="109.8" font-size="6.5" fill="#222">4</text>
<text x="379.3" y="109.8" font-size="6.5" fill="#222">11</text>
<text x="399.3" y="109.8" font-size="6.5" fill="#222">18</text>
<text x="419.4" y="109.8" font-size="6.5" fill="#222">25</text>
<text x="439.5" y="109.8" font-size="6.5" fill="#222">1</text>
<text x="459.6" y="109.8" font-size="6.5" fill="#222">8</text>
<text x="479.6" y="109.8" font-size="6.5" fill="#222">15</text>
<text x="499.7" y="109.8" font-size="6.5" fill="#222">22</text>
<text x="519.8" y="109.8" font-size="6.5" fill="#222">29</text>
<text x="539.8" y="109.8" font-size="6.5" fill="#222">7</text>
<text x="559.9" y="109.8" font-size="6.5" fill="#222">14</text>
<text x="580.0" y="109.8" font-size="6.5" fill="#222">21</text>
<text x="600.0" y="109.8" font-size="6.5" fill="#222">28</text>
<text x="620.1" y="109.8" font-size="6.5" fill="#222">4</text>
<text x="640.2" y="109.8" font-size="6.5" fill="#222">11</text>
<text x="660.2" y="109.8" font-size="6.5" fill="#222">18</text>
<text x="680.3" y="109.8" font-size="6.5" fill="#222">25</text>
<text x="700.4" y="109.8" font-size="6.5" fill="#222">2</text>
<text x="720.5" y="109.8" font-size="6.5" fill="#222">9</text>
<text x="740.5" y="109.8" font-size="6.5" fill="#222">16</text>
<text x="760.6" y="109.8" font-size="6.5" fill="#222">23</text>
<text x="780.7" y="109.8" font-size="6.5" fill="#222">30</text>
<text x="800.7" y="109.8" font-size="6.5" fill="#222">6</text>
<text x="820.8" y="109.8" font-size="6.5" fill="#222">13</text>
<text x="840.9" y="109.8" font-size="6.5" fill="#222">20</text>
<text x="861.0" y="109.8" font-size="6.5" fill="#222">27</text>
<text x="881.0" y="109.8" font-size="6.5" fill="#222">4</text>
<text x="901.1" y="109.8" font-size="6.5" fill="#222">11</text>
<text x="921.2" y="109.8" font-size="6.5" fill="#222">18</text>
<path d="M353.3 97.5V102M438.4 97.5V102M522.4 97.5V102M615.6 97.5V102M699.3 97.5V102M787.4 97.5V102M876.5 97.5V102" stroke="#ff2030" stroke-width=".9"/>
<text x="343" y="101.3" font-size="6.5" fill="#222">D</text>
<text x="396" y="101.2" font-size="6.5" text-anchor="middle" fill="#222">January</text>
<text x="480" y="101.2" font-size="6.5" text-anchor="middle" fill="#222">February</text>
<text x="567.7" y="101.2" font-size="6.5" text-anchor="middle" fill="#222">March</text>
<text x="656" y="101.2" font-size="6.5" text-anchor="middle" fill="#222">April</text>
<text x="742" y="101.2" font-size="6.5" text-anchor="middle" fill="#222">May</text>
<text x="831" y="101.2" font-size="6.5" text-anchor="middle" fill="#222">June</text>
<text x="911" y="101.2" font-size="6.5" text-anchor="middle" fill="#222">July</text>
<rect x="340" y="112" width="607" height="16" fill="#dddb6b"/>
<rect x="341" y="130.5" width="16" height="14" fill="url(#p_dots)"/>
<path d="M340 145.5H947" stroke="#a8acac" stroke-width=".9"/>
<rect x="341" y="147.5" width="16" height="14" fill="url(#p_dots)"/>
<path d="M340 162.5H947" stroke="#a8acac" stroke-width=".9"/>
<rect x="357.5" y="163" width="590" height="16" fill="#bddada"/>
<rect x="341" y="164.5" width="16" height="14" fill="url(#p_dots)"/>
<path d="M340 179.5H947" stroke="#a8acac" stroke-width=".9"/>
<rect x="341" y="181.5" width="16" height="14" fill="url(#p_dots)"/>
<path d="M340 196.5H947" stroke="#a8acac" stroke-width=".9"/>
<rect x="341" y="198.5" width="16" height="14" fill="url(#p_dots)"/>
<path d="M340 213.5H947" stroke="#a8acac" stroke-width=".9"/>
<rect x="340" y="214" width="607" height="13" fill="#dddb6b"/>
<rect x="357.5" y="227" width="590" height="16" fill="#bddada"/>
<rect x="341" y="228.5" width="16" height="14" fill="url(#p_dots)"/>
<path d="M340 243.5H947" stroke="#a8acac" stroke-width=".9"/>
<rect x="341" y="245.5" width="16" height="14" fill="url(#p_dots)"/>
<path d="M340 260.5H947" stroke="#a8acac" stroke-width=".9"/>
<rect x="341" y="262.5" width="16" height="14" fill="url(#p_dots)"/>
<path d="M340 277.5H947" stroke="#a8acac" stroke-width=".9"/>
<rect x="341" y="279.5" width="16" height="14" fill="url(#p_dots)"/>
<path d="M340 294.5H947" stroke="#a8acac" stroke-width=".9"/>
<rect x="341" y="296.5" width="16" height="14" fill="url(#p_dots)"/>
<path d="M340 311.5H947" stroke="#a8acac" stroke-width=".9"/>
<rect x="341" y="313.5" width="16" height="14" fill="url(#p_dots)"/>
<path d="M340 328.5H947" stroke="#a8acac" stroke-width=".9"/>
<rect x="341" y="330.5" width="16" height="6" fill="url(#p_dots)"/>
<path d="M340 337.5H947" stroke="#a8acac" stroke-width=".9"/>
<rect x="599" y="111.5" width="19.8" height="226.5" fill="#fff" fill-opacity=".0"/>
<rect x="599" y="111.5" width="19.8" height="226.5" fill="url(#p_hol)"/>
<path d="M599.2 111.5V338M618.6 111.5V338" stroke="#6a6af0" stroke-width=".8"/>
<path d="M438.4 111.5V338" stroke="#2222ee" stroke-width=".9" stroke-dasharray="5 2.5 1 2.5"/>
<path d="M522.4 111.5V338" stroke="#2222ee" stroke-width=".9" stroke-dasharray="5 2.5 1 2.5"/>
<path d="M615.6 111.5V338" stroke="#2222ee" stroke-width=".9" stroke-dasharray="5 2.5 1 2.5"/>
<path d="M699.3 111.5V338" stroke="#2222ee" stroke-width=".9" stroke-dasharray="5 2.5 1 2.5"/>
<path d="M787.4 111.5V338" stroke="#2222ee" stroke-width=".9" stroke-dasharray="5 2.5 1 2.5"/>
<path d="M876.5 111.5V338" stroke="#2222ee" stroke-width=".9" stroke-dasharray="5 2.5 1 2.5"/>
<rect x="358.6" y="136.8" width="20.1" height="6.3" fill="#000"/>
<rect x="358.0" y="136.0" width="20.1" height="6.3" fill="url(#p_purple)" stroke="#111" stroke-width=".8"/>
<rect x="378.7" y="136.8" width="20.1" height="6.3" fill="#000"/>
<rect x="378.1" y="136.0" width="20.1" height="6.3" fill="url(#p_blue)" stroke="#111" stroke-width=".8"/>
<rect x="398.7" y="136.8" width="20.1" height="6.3" fill="#000"/>
<rect x="398.1" y="136.0" width="20.1" height="6.3" fill="url(#p_green)" stroke="#111" stroke-width=".8"/>
<rect x="418.8" y="136.8" width="20.1" height="6.3" fill="#000"/>
<rect x="418.2" y="136.0" width="20.1" height="6.3" fill="url(#p_yellow)" stroke="#111" stroke-width=".8"/>
<rect x="438.9" y="136.8" width="40.1" height="6.3" fill="#000"/>
<rect x="438.3" y="136.0" width="40.1" height="6.3" fill="url(#p_red)" stroke="#111" stroke-width=".8"/>
<rect x="479.0" y="136.8" width="20.1" height="6.3" fill="#000"/>
<rect x="478.4" y="136.0" width="20.1" height="6.3" fill="url(#p_black)" stroke="#111" stroke-width=".8"/>
<rect x="499.1" y="136.8" width="20.1" height="6.3" fill="#000"/>
<rect x="498.5" y="136.0" width="20.1" height="6.3" fill="url(#p_vl)" stroke="#111" stroke-width=".8"/>
<rect x="519.2" y="136.8" width="20.1" height="6.3" fill="#000"/>
<rect x="518.6" y="136.0" width="20.1" height="6.3" fill="url(#p_orange)" stroke="#111" stroke-width=".8"/>
<rect x="539.2" y="136.8" width="20.1" height="6.3" fill="#000"/>
<rect x="538.6" y="136.0" width="20.1" height="6.3" fill="url(#p_lgreen)" stroke="#111" stroke-width=".8"/>
<rect x="559.3" y="136.8" width="20.1" height="6.3" fill="#000"/>
<rect x="558.7" y="136.0" width="20.1" height="6.3" fill="url(#p_pink)" stroke="#111" stroke-width=".8"/>
<rect x="579.4" y="136.8" width="20.1" height="6.3" fill="#000"/>
<rect x="578.8" y="136.0" width="20.1" height="6.3" fill="url(#p_dgreen)" stroke="#111" stroke-width=".8"/>
<rect x="619.5" y="136.8" width="40.1" height="6.3" fill="#000"/>
<rect x="618.9" y="136.0" width="40.1" height="6.3" fill="url(#p_lblue)" stroke="#111" stroke-width=".8"/>
<rect x="659.6" y="136.8" width="28.5" height="6.3" fill="#000"/>
<rect x="659.0" y="136.0" width="28.5" height="6.3" fill="url(#p_ox)" stroke="#111" stroke-width=".8"/>
<rect x="699.8" y="136.8" width="28.5" height="6.3" fill="#000"/>
<rect x="699.2" y="136.0" width="28.5" height="6.3" fill="url(#p_teal)" stroke="#111" stroke-width=".8"/>
<rect x="679.7" y="133.2" width="29.1" height="6.3" fill="#000"/>
<rect x="679.1" y="132.4" width="29.1" height="6.3" fill="url(#p_rx)" stroke="#111" stroke-width=".8"/>
<rect x="728.3" y="136.8" width="40.1" height="6.3" fill="#000"/>
<rect x="727.7" y="136.0" width="40.1" height="6.3" fill="url(#p_gray)" stroke="#111" stroke-width=".8"/>
<rect x="768.4" y="136.8" width="28.3" height="6.3" fill="#000"/>
<rect x="767.8" y="136.0" width="28.3" height="6.3" fill="url(#p_lime)" stroke="#111" stroke-width=".8"/>
<rect x="809.0" y="136.8" width="27.7" height="6.3" fill="#000"/>
<rect x="808.4" y="136.0" width="27.7" height="6.3" fill="url(#p_aqua)" stroke="#111" stroke-width=".8"/>
<rect x="788.1" y="133.2" width="28.5" height="6.3" fill="#000"/>
<rect x="787.5" y="132.4" width="28.5" height="6.3" fill="url(#p_gx)" stroke="#111" stroke-width=".8"/>
<rect x="836.7" y="136.8" width="40.5" height="6.3" fill="#000"/>
<rect x="836.1" y="136.0" width="40.5" height="6.3" fill="url(#p_bx)" stroke="#111" stroke-width=".8"/>
<rect x="877.2" y="136.8" width="19.3" height="6.3" fill="#000"/>
<rect x="876.6" y="136.0" width="19.3" height="6.3" fill="url(#p_pchk)" stroke="#111" stroke-width=".8"/>
<rect x="896.5" y="136.8" width="20.9" height="6.3" fill="#000"/>
<rect x="895.9" y="136.0" width="20.9" height="6.3" fill="url(#p_pdot)" stroke="#111" stroke-width=".8"/>
<rect x="358.0" y="135.8" width="60.2" height="3.9" fill="#00007c"/>
<path d="M598.8 139.2H616" stroke="#111" stroke-width=".8"/><path d="M615 137.1L618.4 139.2L615 141.3Z" fill="#000"/>
<path d="M378.1 129.3V136.0" stroke="#222" stroke-width=".8"/><path d="M372.1 129.8L377.3 132.2L372.1 134.6Z" fill="#22e022" stroke="#0a5a0a" stroke-width=".6"/>
<text x="356.0" y="141.6" font-size="6.6" text-anchor="end" fill="#2a2222">10</text>
<rect x="358.6" y="153.8" width="20.1" height="6.3" fill="#000"/>
<rect x="358.0" y="153.0" width="20.1" height="6.3" fill="url(#p_purple)" stroke="#111" stroke-width=".8"/>
<rect x="378.7" y="153.8" width="20.1" height="6.3" fill="#000"/>
<rect x="378.1" y="153.0" width="20.1" height="6.3" fill="url(#p_blue)" stroke="#111" stroke-width=".8"/>
<rect x="398.7" y="153.8" width="20.1" height="6.3" fill="#000"/>
<rect x="398.1" y="153.0" width="20.1" height="6.3" fill="url(#p_green)" stroke="#111" stroke-width=".8"/>
<rect x="418.8" y="153.8" width="20.1" height="6.3" fill="#000"/>
<rect x="418.2" y="153.0" width="20.1" height="6.3" fill="url(#p_yellow)" stroke="#111" stroke-width=".8"/>
<rect x="438.9" y="153.8" width="40.1" height="6.3" fill="#000"/>
<rect x="438.3" y="153.0" width="40.1" height="6.3" fill="url(#p_red)" stroke="#111" stroke-width=".8"/>
<rect x="479.0" y="153.8" width="20.1" height="6.3" fill="#000"/>
<rect x="478.4" y="153.0" width="20.1" height="6.3" fill="url(#p_black)" stroke="#111" stroke-width=".8"/>
<rect x="499.1" y="153.8" width="20.1" height="6.3" fill="#000"/>
<rect x="498.5" y="153.0" width="20.1" height="6.3" fill="url(#p_vl)" stroke="#111" stroke-width=".8"/>
<rect x="519.2" y="153.8" width="20.1" height="6.3" fill="#000"/>
<rect x="518.6" y="153.0" width="20.1" height="6.3" fill="url(#p_orange)" stroke="#111" stroke-width=".8"/>
<rect x="539.2" y="153.8" width="20.1" height="6.3" fill="#000"/>
<rect x="538.6" y="153.0" width="20.1" height="6.3" fill="url(#p_lgreen)" stroke="#111" stroke-width=".8"/>
<rect x="559.3" y="153.8" width="20.1" height="6.3" fill="#000"/>
<rect x="558.7" y="153.0" width="20.1" height="6.3" fill="url(#p_pink)" stroke="#111" stroke-width=".8"/>
<rect x="579.4" y="153.8" width="20.1" height="6.3" fill="#000"/>
<rect x="578.8" y="153.0" width="20.1" height="6.3" fill="url(#p_dgreen)" stroke="#111" stroke-width=".8"/>
<rect x="619.5" y="153.8" width="40.1" height="6.3" fill="#000"/>
<rect x="618.9" y="153.0" width="40.1" height="6.3" fill="url(#p_lblue)" stroke="#111" stroke-width=".8"/>
<rect x="659.6" y="153.8" width="28.5" height="6.3" fill="#000"/>
<rect x="659.0" y="153.0" width="28.5" height="6.3" fill="url(#p_ox)" stroke="#111" stroke-width=".8"/>
<rect x="699.8" y="153.8" width="28.5" height="6.3" fill="#000"/>
<rect x="699.2" y="153.0" width="28.5" height="6.3" fill="url(#p_teal)" stroke="#111" stroke-width=".8"/>
<rect x="679.7" y="150.2" width="29.1" height="6.3" fill="#000"/>
<rect x="679.1" y="149.4" width="29.1" height="6.3" fill="url(#p_rx)" stroke="#111" stroke-width=".8"/>
<rect x="728.3" y="153.8" width="40.1" height="6.3" fill="#000"/>
<rect x="727.7" y="153.0" width="40.1" height="6.3" fill="url(#p_gray)" stroke="#111" stroke-width=".8"/>
<rect x="768.4" y="153.8" width="28.3" height="6.3" fill="#000"/>
<rect x="767.8" y="153.0" width="28.3" height="6.3" fill="url(#p_lime)" stroke="#111" stroke-width=".8"/>
<rect x="809.0" y="153.8" width="27.7" height="6.3" fill="#000"/>
<rect x="808.4" y="153.0" width="27.7" height="6.3" fill="url(#p_aqua)" stroke="#111" stroke-width=".8"/>
<rect x="788.1" y="150.2" width="28.5" height="6.3" fill="#000"/>
<rect x="787.5" y="149.4" width="28.5" height="6.3" fill="url(#p_gx)" stroke="#111" stroke-width=".8"/>
<rect x="836.7" y="153.8" width="40.5" height="6.3" fill="#000"/>
<rect x="836.1" y="153.0" width="40.5" height="6.3" fill="url(#p_bx)" stroke="#111" stroke-width=".8"/>
<rect x="877.2" y="153.8" width="19.3" height="6.3" fill="#000"/>
<rect x="876.6" y="153.0" width="19.3" height="6.3" fill="url(#p_pchk)" stroke="#111" stroke-width=".8"/>
<rect x="896.5" y="153.8" width="20.9" height="6.3" fill="#000"/>
<rect x="895.9" y="153.0" width="20.9" height="6.3" fill="url(#p_pdot)" stroke="#111" stroke-width=".8"/>
<rect x="358.0" y="152.8" width="88.3" height="3.9" fill="#00007c"/>
<path d="M598.8 156.2H616" stroke="#111" stroke-width=".8"/><path d="M615 154.1L618.4 156.2L615 158.3Z" fill="#000"/>
<path d="M378.1 146.3V153.0" stroke="#222" stroke-width=".8"/><path d="M372.1 146.8L377.3 149.2L372.1 151.6Z" fill="#22e022" stroke="#0a5a0a" stroke-width=".6"/>
<text x="356.0" y="158.6" font-size="6.6" text-anchor="end" fill="#2a2222">30</text>
<rect x="378.7" y="170.8" width="20.1" height="6.3" fill="#000"/>
<rect x="378.1" y="170.0" width="20.1" height="6.3" fill="url(#p_purple)" stroke="#111" stroke-width=".8"/>
<rect x="398.7" y="170.8" width="20.1" height="6.3" fill="#000"/>
<rect x="398.1" y="170.0" width="20.1" height="6.3" fill="url(#p_blue)" stroke="#111" stroke-width=".8"/>
<rect x="418.8" y="170.8" width="20.1" height="6.3" fill="#000"/>
<rect x="418.2" y="170.0" width="20.1" height="6.3" fill="url(#p_green)" stroke="#111" stroke-width=".8"/>
<rect x="438.9" y="170.8" width="20.1" height="6.3" fill="#000"/>
<rect x="438.3" y="170.0" width="20.1" height="6.3" fill="url(#p_yellow)" stroke="#111" stroke-width=".8"/>
<rect x="459.0" y="170.8" width="40.1" height="6.3" fill="#000"/>
<rect x="458.4" y="170.0" width="40.1" height="6.3" fill="url(#p_red)" stroke="#111" stroke-width=".8"/>
<rect x="499.1" y="170.8" width="20.1" height="6.3" fill="#000"/>
<rect x="498.5" y="170.0" width="20.1" height="6.3" fill="url(#p_black)" stroke="#111" stroke-width=".8"/>
<rect x="519.2" y="170.8" width="20.1" height="6.3" fill="#000"/>
<rect x="518.6" y="170.0" width="20.1" height="6.3" fill="url(#p_vl)" stroke="#111" stroke-width=".8"/>
<rect x="539.2" y="170.8" width="20.1" height="6.3" fill="#000"/>
<rect x="538.6" y="170.0" width="20.1" height="6.3" fill="url(#p_orange)" stroke="#111" stroke-width=".8"/>
<rect x="559.3" y="170.8" width="20.1" height="6.3" fill="#000"/>
<rect x="558.7" y="170.0" width="20.1" height="6.3" fill="url(#p_lgreen)" stroke="#111" stroke-width=".8"/>
<rect x="579.4" y="170.8" width="20.1" height="6.3" fill="#000"/>
<rect x="578.8" y="170.0" width="20.1" height="6.3" fill="url(#p_pink)" stroke="#111" stroke-width=".8"/>
<rect x="619.5" y="170.8" width="20.1" height="6.3" fill="#000"/>
<rect x="618.9" y="170.0" width="20.1" height="6.3" fill="url(#p_dgreen)" stroke="#111" stroke-width=".8"/>
<rect x="639.6" y="170.8" width="40.1" height="6.3" fill="#000"/>
<rect x="639.0" y="170.0" width="40.1" height="6.3" fill="url(#p_lblue)" stroke="#111" stroke-width=".8"/>
<rect x="679.7" y="170.8" width="28.5" height="6.3" fill="#000"/>
<rect x="679.1" y="170.0" width="28.5" height="6.3" fill="url(#p_ox)" stroke="#111" stroke-width=".8"/>
<rect x="719.9" y="170.8" width="28.5" height="6.3" fill="#000"/>
<rect x="719.3" y="170.0" width="28.5" height="6.3" fill="url(#p_teal)" stroke="#111" stroke-width=".8"/>
<rect x="699.8" y="167.2" width="29.1" height="6.3" fill="#000"/>
<rect x="699.2" y="166.4" width="29.1" height="6.3" fill="url(#p_rx)" stroke="#111" stroke-width=".8"/>
<rect x="748.4" y="170.8" width="40.1" height="6.3" fill="#000"/>
<rect x="747.8" y="170.0" width="40.1" height="6.3" fill="url(#p_gray)" stroke="#111" stroke-width=".8"/>
<rect x="788.5" y="170.8" width="28.3" height="6.3" fill="#000"/>
<rect x="787.9" y="170.0" width="28.3" height="6.3" fill="url(#p_lime)" stroke="#111" stroke-width=".8"/>
<rect x="829.0" y="170.8" width="27.7" height="6.3" fill="#000"/>
<rect x="828.4" y="170.0" width="27.7" height="6.3" fill="url(#p_aqua)" stroke="#111" stroke-width=".8"/>
<rect x="808.2" y="167.2" width="28.5" height="6.3" fill="#000"/>
<rect x="807.6" y="166.4" width="28.5" height="6.3" fill="url(#p_gx)" stroke="#111" stroke-width=".8"/>
<rect x="856.7" y="170.8" width="40.5" height="6.3" fill="#000"/>
<rect x="856.1" y="170.0" width="40.5" height="6.3" fill="url(#p_bx)" stroke="#111" stroke-width=".8"/>
<rect x="897.3" y="170.8" width="19.3" height="6.3" fill="#000"/>
<rect x="896.7" y="170.0" width="19.3" height="6.3" fill="url(#p_pchk)" stroke="#111" stroke-width=".8"/>
<rect x="916.5" y="170.8" width="20.9" height="6.3" fill="#000"/>
<rect x="915.9" y="170.0" width="20.9" height="6.3" fill="url(#p_pdot)" stroke="#111" stroke-width=".8"/>
<rect x="378.1" y="169.8" width="23.9" height="3.9" fill="#00007c"/>
<path d="M598.8 173.2H616" stroke="#111" stroke-width=".8"/><path d="M615 171.1L618.4 173.2L615 175.3Z" fill="#000"/>
<path d="M398.1 163.3V170.0" stroke="#222" stroke-width=".8"/><path d="M392.1 163.8L397.3 166.2L392.1 168.6Z" fill="#22e022" stroke="#0a5a0a" stroke-width=".6"/>
<rect x="367.1" y="169.0" width="9.5" height="8" fill="#fff"/>
<text x="376.1" y="175.6" font-size="6.6" text-anchor="end" fill="#2a2222">32</text>
<rect x="378.7" y="187.8" width="20.1" height="6.3" fill="#000"/>
<rect x="378.1" y="187.0" width="20.1" height="6.3" fill="url(#p_purple)" stroke="#111" stroke-width=".8"/>
<rect x="398.7" y="187.8" width="20.1" height="6.3" fill="#000"/>
<rect x="398.1" y="187.0" width="20.1" height="6.3" fill="url(#p_blue)" stroke="#111" stroke-width=".8"/>
<rect x="418.8" y="187.8" width="20.1" height="6.3" fill="#000"/>
<rect x="418.2" y="187.0" width="20.1" height="6.3" fill="url(#p_green)" stroke="#111" stroke-width=".8"/>
<rect x="438.9" y="187.8" width="20.1" height="6.3" fill="#000"/>
<rect x="438.3" y="187.0" width="20.1" height="6.3" fill="url(#p_yellow)" stroke="#111" stroke-width=".8"/>
<rect x="459.0" y="187.8" width="40.1" height="6.3" fill="#000"/>
<rect x="458.4" y="187.0" width="40.1" height="6.3" fill="url(#p_red)" stroke="#111" stroke-width=".8"/>
<rect x="499.1" y="187.8" width="20.1" height="6.3" fill="#000"/>
<rect x="498.5" y="187.0" width="20.1" height="6.3" fill="url(#p_black)" stroke="#111" stroke-width=".8"/>
<rect x="519.2" y="187.8" width="20.1" height="6.3" fill="#000"/>
<rect x="518.6" y="187.0" width="20.1" height="6.3" fill="url(#p_vl)" stroke="#111" stroke-width=".8"/>
<rect x="539.2" y="187.8" width="20.1" height="6.3" fill="#000"/>
<rect x="538.6" y="187.0" width="20.1" height="6.3" fill="url(#p_orange)" stroke="#111" stroke-width=".8"/>
<rect x="559.3" y="187.8" width="20.1" height="6.3" fill="#000"/>
<rect x="558.7" y="187.0" width="20.1" height="6.3" fill="url(#p_lgreen)" stroke="#111" stroke-width=".8"/>
<rect x="579.4" y="187.8" width="20.1" height="6.3" fill="#000"/>
<rect x="578.8" y="187.0" width="20.1" height="6.3" fill="url(#p_pink)" stroke="#111" stroke-width=".8"/>
<rect x="619.5" y="187.8" width="20.1" height="6.3" fill="#000"/>
<rect x="618.9" y="187.0" width="20.1" height="6.3" fill="url(#p_dgreen)" stroke="#111" stroke-width=".8"/>
<rect x="639.6" y="187.8" width="40.1" height="6.3" fill="#000"/>
<rect x="639.0" y="187.0" width="40.1" height="6.3" fill="url(#p_lblue)" stroke="#111" stroke-width=".8"/>
<rect x="679.7" y="187.8" width="28.5" height="6.3" fill="#000"/>
<rect x="679.1" y="187.0" width="28.5" height="6.3" fill="url(#p_ox)" stroke="#111" stroke-width=".8"/>
<rect x="719.9" y="187.8" width="28.5" height="6.3" fill="#000"/>
<rect x="719.3" y="187.0" width="28.5" height="6.3" fill="url(#p_teal)" stroke="#111" stroke-width=".8"/>
<rect x="699.8" y="184.2" width="29.1" height="6.3" fill="#000"/>
<rect x="699.2" y="183.4" width="29.1" height="6.3" fill="url(#p_rx)" stroke="#111" stroke-width=".8"/>
<rect x="748.4" y="187.8" width="40.1" height="6.3" fill="#000"/>
<rect x="747.8" y="187.0" width="40.1" height="6.3" fill="url(#p_gray)" stroke="#111" stroke-width=".8"/>
<rect x="788.5" y="187.8" width="28.3" height="6.3" fill="#000"/>
<rect x="787.9" y="187.0" width="28.3" height="6.3" fill="url(#p_lime)" stroke="#111" stroke-width=".8"/>
<rect x="829.0" y="187.8" width="27.7" height="6.3" fill="#000"/>
<rect x="828.4" y="187.0" width="27.7" height="6.3" fill="url(#p_aqua)" stroke="#111" stroke-width=".8"/>
<rect x="808.2" y="184.2" width="28.5" height="6.3" fill="#000"/>
<rect x="807.6" y="183.4" width="28.5" height="6.3" fill="url(#p_gx)" stroke="#111" stroke-width=".8"/>
<rect x="856.7" y="187.8" width="40.5" height="6.3" fill="#000"/>
<rect x="856.1" y="187.0" width="40.5" height="6.3" fill="url(#p_bx)" stroke="#111" stroke-width=".8"/>
<rect x="897.3" y="187.8" width="19.3" height="6.3" fill="#000"/>
<rect x="896.7" y="187.0" width="19.3" height="6.3" fill="url(#p_pchk)" stroke="#111" stroke-width=".8"/>
<rect x="916.5" y="187.8" width="20.9" height="6.3" fill="#000"/>
<rect x="915.9" y="187.0" width="20.9" height="6.3" fill="url(#p_pdot)" stroke="#111" stroke-width=".8"/>
<rect x="378.1" y="186.8" width="80.2" height="3.9" fill="#00007c"/>
<path d="M598.8 190.2H616" stroke="#111" stroke-width=".8"/><path d="M615 188.1L618.4 190.2L615 192.3Z" fill="#000"/>
<path d="M398.1 180.3V187.0" stroke="#222" stroke-width=".8"/><path d="M392.1 180.8L397.3 183.2L392.1 185.6Z" fill="#22e022" stroke="#0a5a0a" stroke-width=".6"/>
<text x="376.1" y="192.6" font-size="6.6" text-anchor="end" fill="#2a2222">35</text>
<rect x="398.7" y="204.8" width="20.1" height="6.3" fill="#000"/>
<rect x="398.1" y="204.0" width="20.1" height="6.3" fill="url(#p_purple)" stroke="#111" stroke-width=".8"/>
<rect x="418.8" y="204.8" width="20.1" height="6.3" fill="#000"/>
<rect x="418.2" y="204.0" width="20.1" height="6.3" fill="url(#p_blue)" stroke="#111" stroke-width=".8"/>
<rect x="438.9" y="204.8" width="20.1" height="6.3" fill="#000"/>
<rect x="438.3" y="204.0" width="20.1" height="6.3" fill="url(#p_green)" stroke="#111" stroke-width=".8"/>
<rect x="459.0" y="204.8" width="20.1" height="6.3" fill="#000"/>
<rect x="458.4" y="204.0" width="20.1" height="6.3" fill="url(#p_yellow)" stroke="#111" stroke-width=".8"/>
<rect x="479.0" y="204.8" width="40.1" height="6.3" fill="#000"/>
<rect x="478.4" y="204.0" width="40.1" height="6.3" fill="url(#p_red)" stroke="#111" stroke-width=".8"/>
<rect x="519.2" y="204.8" width="20.1" height="6.3" fill="#000"/>
<rect x="518.6" y="204.0" width="20.1" height="6.3" fill="url(#p_black)" stroke="#111" stroke-width=".8"/>
<rect x="539.2" y="204.8" width="20.1" height="6.3" fill="#000"/>
<rect x="538.6" y="204.0" width="20.1" height="6.3" fill="url(#p_vl)" stroke="#111" stroke-width=".8"/>
<rect x="559.3" y="204.8" width="20.1" height="6.3" fill="#000"/>
<rect x="558.7" y="204.0" width="20.1" height="6.3" fill="url(#p_orange)" stroke="#111" stroke-width=".8"/>
<rect x="579.4" y="204.8" width="20.1" height="6.3" fill="#000"/>
<rect x="578.8" y="204.0" width="20.1" height="6.3" fill="url(#p_lgreen)" stroke="#111" stroke-width=".8"/>
<rect x="619.5" y="204.8" width="20.1" height="6.3" fill="#000"/>
<rect x="618.9" y="204.0" width="20.1" height="6.3" fill="url(#p_pink)" stroke="#111" stroke-width=".8"/>
<rect x="639.6" y="204.8" width="20.1" height="6.3" fill="#000"/>
<rect x="639.0" y="204.0" width="20.1" height="6.3" fill="url(#p_dgreen)" stroke="#111" stroke-width=".8"/>
<rect x="659.6" y="204.8" width="40.1" height="6.3" fill="#000"/>
<rect x="659.0" y="204.0" width="40.1" height="6.3" fill="url(#p_lblue)" stroke="#111" stroke-width=".8"/>
<rect x="699.8" y="204.8" width="28.5" height="6.3" fill="#000"/>
<rect x="699.2" y="204.0" width="28.5" height="6.3" fill="url(#p_ox)" stroke="#111" stroke-width=".8"/>
<rect x="739.9" y="204.8" width="28.5" height="6.3" fill="#000"/>
<rect x="739.3" y="204.0" width="28.5" height="6.3" fill="url(#p_teal)" stroke="#111" stroke-width=".8"/>
<rect x="719.9" y="201.2" width="29.1" height="6.3" fill="#000"/>
<rect x="719.3" y="200.4" width="29.1" height="6.3" fill="url(#p_rx)" stroke="#111" stroke-width=".8"/>
<rect x="768.4" y="204.8" width="40.1" height="6.3" fill="#000"/>
<rect x="767.8" y="204.0" width="40.1" height="6.3" fill="url(#p_gray)" stroke="#111" stroke-width=".8"/>
<rect x="808.6" y="204.8" width="28.3" height="6.3" fill="#000"/>
<rect x="808.0" y="204.0" width="28.3" height="6.3" fill="url(#p_lime)" stroke="#111" stroke-width=".8"/>
<rect x="849.1" y="204.8" width="27.7" height="6.3" fill="#000"/>
<rect x="848.5" y="204.0" width="27.7" height="6.3" fill="url(#p_aqua)" stroke="#111" stroke-width=".8"/>
<rect x="828.2" y="201.2" width="28.5" height="6.3" fill="#000"/>
<rect x="827.6" y="200.4" width="28.5" height="6.3" fill="url(#p_gx)" stroke="#111" stroke-width=".8"/>
<rect x="876.8" y="204.8" width="40.5" height="6.3" fill="#000"/>
<rect x="876.2" y="204.0" width="40.5" height="6.3" fill="url(#p_bx)" stroke="#111" stroke-width=".8"/>
<rect x="917.3" y="204.8" width="19.3" height="6.3" fill="#000"/>
<rect x="916.7" y="204.0" width="19.3" height="6.3" fill="url(#p_pchk)" stroke="#111" stroke-width=".8"/>
<rect x="936.6" y="204.8" width="14.0" height="6.3" fill="#000"/>
<rect x="936.0" y="204.0" width="14.0" height="6.3" fill="url(#p_pdot)" stroke="#111" stroke-width=".8"/>
<rect x="398.1" y="203.8" width="40.3" height="3.9" fill="#00007c"/>
<path d="M598.8 207.2H616" stroke="#111" stroke-width=".8"/><path d="M615 205.1L618.4 207.2L615 209.3Z" fill="#000"/>
<path d="M418.2 197.3V204.0" stroke="#222" stroke-width=".8"/><path d="M412.2 197.8L417.4 200.2L412.2 202.6Z" fill="#22e022" stroke="#0a5a0a" stroke-width=".6"/>
<text x="396.1" y="209.6" font-size="6.6" text-anchor="end" fill="#2a2222">27</text>
<rect x="398.7" y="234.8" width="20.1" height="6.3" fill="#000"/>
<rect x="398.1" y="234.0" width="20.1" height="6.3" fill="url(#p_purple)" stroke="#111" stroke-width=".8"/>
<rect x="418.8" y="234.8" width="20.1" height="6.3" fill="#000"/>
<rect x="418.2" y="234.0" width="20.1" height="6.3" fill="url(#p_blue)" stroke="#111" stroke-width=".8"/>
<rect x="438.9" y="234.8" width="20.1" height="6.3" fill="#000"/>
<rect x="438.3" y="234.0" width="20.1" height="6.3" fill="url(#p_green)" stroke="#111" stroke-width=".8"/>
<rect x="459.0" y="234.8" width="20.1" height="6.3" fill="#000"/>
<rect x="458.4" y="234.0" width="20.1" height="6.3" fill="url(#p_yellow)" stroke="#111" stroke-width=".8"/>
<rect x="479.0" y="234.8" width="40.1" height="6.3" fill="#000"/>
<rect x="478.4" y="234.0" width="40.1" height="6.3" fill="url(#p_red)" stroke="#111" stroke-width=".8"/>
<rect x="519.2" y="234.8" width="20.1" height="6.3" fill="#000"/>
<rect x="518.6" y="234.0" width="20.1" height="6.3" fill="url(#p_black)" stroke="#111" stroke-width=".8"/>
<rect x="539.2" y="234.8" width="20.1" height="6.3" fill="#000"/>
<rect x="538.6" y="234.0" width="20.1" height="6.3" fill="url(#p_vl)" stroke="#111" stroke-width=".8"/>
<rect x="559.3" y="234.8" width="20.1" height="6.3" fill="#000"/>
<rect x="558.7" y="234.0" width="20.1" height="6.3" fill="url(#p_orange)" stroke="#111" stroke-width=".8"/>
<rect x="579.4" y="234.8" width="20.1" height="6.3" fill="#000"/>
<rect x="578.8" y="234.0" width="20.1" height="6.3" fill="url(#p_lgreen)" stroke="#111" stroke-width=".8"/>
<rect x="619.5" y="234.8" width="20.1" height="6.3" fill="#000"/>
<rect x="618.9" y="234.0" width="20.1" height="6.3" fill="url(#p_pink)" stroke="#111" stroke-width=".8"/>
<rect x="639.6" y="234.8" width="20.1" height="6.3" fill="#000"/>
<rect x="639.0" y="234.0" width="20.1" height="6.3" fill="url(#p_dgreen)" stroke="#111" stroke-width=".8"/>
<rect x="659.6" y="234.8" width="40.1" height="6.3" fill="#000"/>
<rect x="659.0" y="234.0" width="40.1" height="6.3" fill="url(#p_lblue)" stroke="#111" stroke-width=".8"/>
<rect x="699.8" y="234.8" width="28.5" height="6.3" fill="#000"/>
<rect x="699.2" y="234.0" width="28.5" height="6.3" fill="url(#p_ox)" stroke="#111" stroke-width=".8"/>
<rect x="739.9" y="234.8" width="28.5" height="6.3" fill="#000"/>
<rect x="739.3" y="234.0" width="28.5" height="6.3" fill="url(#p_teal)" stroke="#111" stroke-width=".8"/>
<rect x="719.9" y="231.2" width="29.1" height="6.3" fill="#000"/>
<rect x="719.3" y="230.4" width="29.1" height="6.3" fill="url(#p_rx)" stroke="#111" stroke-width=".8"/>
<rect x="768.4" y="234.8" width="40.1" height="6.3" fill="#000"/>
<rect x="767.8" y="234.0" width="40.1" height="6.3" fill="url(#p_gray)" stroke="#111" stroke-width=".8"/>
<rect x="808.6" y="234.8" width="28.3" height="6.3" fill="#000"/>
<rect x="808.0" y="234.0" width="28.3" height="6.3" fill="url(#p_lime)" stroke="#111" stroke-width=".8"/>
<rect x="849.1" y="234.8" width="27.7" height="6.3" fill="#000"/>
<rect x="848.5" y="234.0" width="27.7" height="6.3" fill="url(#p_aqua)" stroke="#111" stroke-width=".8"/>
<rect x="828.2" y="231.2" width="28.5" height="6.3" fill="#000"/>
<rect x="827.6" y="230.4" width="28.5" height="6.3" fill="url(#p_gx)" stroke="#111" stroke-width=".8"/>
<rect x="876.8" y="234.8" width="40.5" height="6.3" fill="#000"/>
<rect x="876.2" y="234.0" width="40.5" height="6.3" fill="url(#p_bx)" stroke="#111" stroke-width=".8"/>
<rect x="917.3" y="234.8" width="19.3" height="6.3" fill="#000"/>
<rect x="916.7" y="234.0" width="19.3" height="6.3" fill="url(#p_pchk)" stroke="#111" stroke-width=".8"/>
<rect x="936.6" y="234.8" width="14.0" height="6.3" fill="#000"/>
<rect x="936.0" y="234.0" width="14.0" height="6.3" fill="url(#p_pdot)" stroke="#111" stroke-width=".8"/>
<path d="M598.8 237.2H616" stroke="#111" stroke-width=".8"/><path d="M615 235.1L618.4 237.2L615 239.3Z" fill="#000"/>
<path d="M398.1 227.3V234.0" stroke="#222" stroke-width=".8"/><path d="M392.1 227.8L397.3 230.2L392.1 232.6Z" fill="#22e022" stroke="#0a5a0a" stroke-width=".6"/>
<rect x="387.1" y="233.0" width="9.5" height="8" fill="#fff"/>
<text x="396.1" y="239.6" font-size="6.6" text-anchor="end" fill="#2a2222">38</text>
<rect x="418.8" y="251.8" width="20.1" height="6.3" fill="#000"/>
<rect x="418.2" y="251.0" width="20.1" height="6.3" fill="url(#p_purple)" stroke="#111" stroke-width=".8"/>
<rect x="438.9" y="251.8" width="20.1" height="6.3" fill="#000"/>
<rect x="438.3" y="251.0" width="20.1" height="6.3" fill="url(#p_blue)" stroke="#111" stroke-width=".8"/>
<rect x="459.0" y="251.8" width="20.1" height="6.3" fill="#000"/>
<rect x="458.4" y="251.0" width="20.1" height="6.3" fill="url(#p_green)" stroke="#111" stroke-width=".8"/>
<rect x="479.0" y="251.8" width="20.1" height="6.3" fill="#000"/>
<rect x="478.4" y="251.0" width="20.1" height="6.3" fill="url(#p_yellow)" stroke="#111" stroke-width=".8"/>
<rect x="499.1" y="251.8" width="40.1" height="6.3" fill="#000"/>
<rect x="498.5" y="251.0" width="40.1" height="6.3" fill="url(#p_red)" stroke="#111" stroke-width=".8"/>
<rect x="539.2" y="251.8" width="20.1" height="6.3" fill="#000"/>
<rect x="538.6" y="251.0" width="20.1" height="6.3" fill="url(#p_black)" stroke="#111" stroke-width=".8"/>
<rect x="559.3" y="251.8" width="20.1" height="6.3" fill="#000"/>
<rect x="558.7" y="251.0" width="20.1" height="6.3" fill="url(#p_vl)" stroke="#111" stroke-width=".8"/>
<rect x="579.4" y="251.8" width="20.1" height="6.3" fill="#000"/>
<rect x="578.8" y="251.0" width="20.1" height="6.3" fill="url(#p_orange)" stroke="#111" stroke-width=".8"/>
<rect x="619.5" y="251.8" width="20.1" height="6.3" fill="#000"/>
<rect x="618.9" y="251.0" width="20.1" height="6.3" fill="url(#p_lgreen)" stroke="#111" stroke-width=".8"/>
<rect x="639.6" y="251.8" width="20.1" height="6.3" fill="#000"/>
<rect x="639.0" y="251.0" width="20.1" height="6.3" fill="url(#p_pink)" stroke="#111" stroke-width=".8"/>
<rect x="659.6" y="251.8" width="20.1" height="6.3" fill="#000"/>
<rect x="659.0" y="251.0" width="20.1" height="6.3" fill="url(#p_dgreen)" stroke="#111" stroke-width=".8"/>
<rect x="679.7" y="251.8" width="40.1" height="6.3" fill="#000"/>
<rect x="679.1" y="251.0" width="40.1" height="6.3" fill="url(#p_lblue)" stroke="#111" stroke-width=".8"/>
<rect x="719.9" y="251.8" width="28.5" height="6.3" fill="#000"/>
<rect x="719.3" y="251.0" width="28.5" height="6.3" fill="url(#p_ox)" stroke="#111" stroke-width=".8"/>
<rect x="760.0" y="251.8" width="28.5" height="6.3" fill="#000"/>
<rect x="759.4" y="251.0" width="28.5" height="6.3" fill="url(#p_teal)" stroke="#111" stroke-width=".8"/>
<rect x="739.9" y="248.2" width="29.1" height="6.3" fill="#000"/>
<rect x="739.3" y="247.4" width="29.1" height="6.3" fill="url(#p_rx)" stroke="#111" stroke-width=".8"/>
<rect x="788.5" y="251.8" width="40.1" height="6.3" fill="#000"/>
<rect x="787.9" y="251.0" width="40.1" height="6.3" fill="url(#p_gray)" stroke="#111" stroke-width=".8"/>
<rect x="828.6" y="251.8" width="28.3" height="6.3" fill="#000"/>
<rect x="828.0" y="251.0" width="28.3" height="6.3" fill="url(#p_lime)" stroke="#111" stroke-width=".8"/>
<rect x="869.2" y="251.8" width="27.7" height="6.3" fill="#000"/>
<rect x="868.6" y="251.0" width="27.7" height="6.3" fill="url(#p_aqua)" stroke="#111" stroke-width=".8"/>
<rect x="848.3" y="248.2" width="28.5" height="6.3" fill="#000"/>
<rect x="847.7" y="247.4" width="28.5" height="6.3" fill="url(#p_gx)" stroke="#111" stroke-width=".8"/>
<rect x="896.9" y="251.8" width="40.5" height="6.3" fill="#000"/>
<rect x="896.3" y="251.0" width="40.5" height="6.3" fill="url(#p_bx)" stroke="#111" stroke-width=".8"/>
<rect x="937.4" y="251.8" width="13.2" height="6.3" fill="#000"/>
<rect x="936.8" y="251.0" width="13.2" height="6.3" fill="url(#p_pchk)" stroke="#111" stroke-width=".8"/>
<path d="M598.8 254.2H616" stroke="#111" stroke-width=".8"/><path d="M615 252.1L618.4 254.2L615 256.3Z" fill="#000"/>
<path d="M418.2 244.3V251.0" stroke="#222" stroke-width=".8"/><path d="M412.2 244.8L417.4 247.2L412.2 249.6Z" fill="#22e022" stroke="#0a5a0a" stroke-width=".6"/>
<text x="416.2" y="256.6" font-size="6.6" text-anchor="end" fill="#2a2222">18</text>
<rect x="418.8" y="268.8" width="20.1" height="6.3" fill="#000"/>
<rect x="418.2" y="268.0" width="20.1" height="6.3" fill="url(#p_purple)" stroke="#111" stroke-width=".8"/>
<rect x="438.9" y="268.8" width="20.1" height="6.3" fill="#000"/>
<rect x="438.3" y="268.0" width="20.1" height="6.3" fill="url(#p_blue)" stroke="#111" stroke-width=".8"/>
<rect x="459.0" y="268.8" width="20.1" height="6.3" fill="#000"/>
<rect x="458.4" y="268.0" width="20.1" height="6.3" fill="url(#p_green)" stroke="#111" stroke-width=".8"/>
<rect x="479.0" y="268.8" width="20.1" height="6.3" fill="#000"/>
<rect x="478.4" y="268.0" width="20.1" height="6.3" fill="url(#p_yellow)" stroke="#111" stroke-width=".8"/>
<rect x="499.1" y="268.8" width="40.1" height="6.3" fill="#000"/>
<rect x="498.5" y="268.0" width="40.1" height="6.3" fill="url(#p_red)" stroke="#111" stroke-width=".8"/>
<rect x="539.2" y="268.8" width="20.1" height="6.3" fill="#000"/>
<rect x="538.6" y="268.0" width="20.1" height="6.3" fill="url(#p_black)" stroke="#111" stroke-width=".8"/>
<rect x="559.3" y="268.8" width="20.1" height="6.3" fill="#000"/>
<rect x="558.7" y="268.0" width="20.1" height="6.3" fill="url(#p_vl)" stroke="#111" stroke-width=".8"/>
<rect x="579.4" y="268.8" width="20.1" height="6.3" fill="#000"/>
<rect x="578.8" y="268.0" width="20.1" height="6.3" fill="url(#p_orange)" stroke="#111" stroke-width=".8"/>
<rect x="619.5" y="268.8" width="20.1" height="6.3" fill="#000"/>
<rect x="618.9" y="268.0" width="20.1" height="6.3" fill="url(#p_lgreen)" stroke="#111" stroke-width=".8"/>
<rect x="639.6" y="268.8" width="20.1" height="6.3" fill="#000"/>
<rect x="639.0" y="268.0" width="20.1" height="6.3" fill="url(#p_pink)" stroke="#111" stroke-width=".8"/>
<rect x="659.6" y="268.8" width="20.1" height="6.3" fill="#000"/>
<rect x="659.0" y="268.0" width="20.1" height="6.3" fill="url(#p_dgreen)" stroke="#111" stroke-width=".8"/>
<rect x="679.7" y="268.8" width="40.1" height="6.3" fill="#000"/>
<rect x="679.1" y="268.0" width="40.1" height="6.3" fill="url(#p_lblue)" stroke="#111" stroke-width=".8"/>
<rect x="719.9" y="268.8" width="28.5" height="6.3" fill="#000"/>
<rect x="719.3" y="268.0" width="28.5" height="6.3" fill="url(#p_ox)" stroke="#111" stroke-width=".8"/>
<rect x="760.0" y="268.8" width="28.5" height="6.3" fill="#000"/>
<rect x="759.4" y="268.0" width="28.5" height="6.3" fill="url(#p_teal)" stroke="#111" stroke-width=".8"/>
<rect x="739.9" y="265.2" width="29.1" height="6.3" fill="#000"/>
<rect x="739.3" y="264.4" width="29.1" height="6.3" fill="url(#p_rx)" stroke="#111" stroke-width=".8"/>
<rect x="788.5" y="268.8" width="40.1" height="6.3" fill="#000"/>
<rect x="787.9" y="268.0" width="40.1" height="6.3" fill="url(#p_gray)" stroke="#111" stroke-width=".8"/>
<rect x="828.6" y="268.8" width="28.3" height="6.3" fill="#000"/>
<rect x="828.0" y="268.0" width="28.3" height="6.3" fill="url(#p_lime)" stroke="#111" stroke-width=".8"/>
<rect x="869.2" y="268.8" width="27.7" height="6.3" fill="#000"/>
<rect x="868.6" y="268.0" width="27.7" height="6.3" fill="url(#p_aqua)" stroke="#111" stroke-width=".8"/>
<rect x="848.3" y="265.2" width="28.5" height="6.3" fill="#000"/>
<rect x="847.7" y="264.4" width="28.5" height="6.3" fill="url(#p_gx)" stroke="#111" stroke-width=".8"/>
<rect x="896.9" y="268.8" width="40.5" height="6.3" fill="#000"/>
<rect x="896.3" y="268.0" width="40.5" height="6.3" fill="url(#p_bx)" stroke="#111" stroke-width=".8"/>
<rect x="937.4" y="268.8" width="13.2" height="6.3" fill="#000"/>
<rect x="936.8" y="268.0" width="13.2" height="6.3" fill="url(#p_pchk)" stroke="#111" stroke-width=".8"/>
<rect x="418.2" y="267.8" width="20.2" height="3.9" fill="#00007c"/>
<path d="M598.8 271.2H616" stroke="#111" stroke-width=".8"/><path d="M615 269.1L618.4 271.2L615 273.3Z" fill="#000"/>
<path d="M438.3 261.3V268.0" stroke="#222" stroke-width=".8"/><path d="M432.3 261.8L437.5 264.2L432.3 266.6Z" fill="#22e022" stroke="#0a5a0a" stroke-width=".6"/>
<text x="416.2" y="273.6" font-size="6.6" text-anchor="end" fill="#2a2222">24</text>
<rect x="438.9" y="285.8" width="20.1" height="6.3" fill="#000"/>
<rect x="438.3" y="285.0" width="20.1" height="6.3" fill="url(#p_purple)" stroke="#111" stroke-width=".8"/>
<rect x="459.0" y="285.8" width="20.1" height="6.3" fill="#000"/>
<rect x="458.4" y="285.0" width="20.1" height="6.3" fill="url(#p_blue)" stroke="#111" stroke-width=".8"/>
<rect x="479.0" y="285.8" width="20.1" height="6.3" fill="#000"/>
<rect x="478.4" y="285.0" width="20.1" height="6.3" fill="url(#p_green)" stroke="#111" stroke-width=".8"/>
<rect x="499.1" y="285.8" width="20.1" height="6.3" fill="#000"/>
<rect x="498.5" y="285.0" width="20.1" height="6.3" fill="url(#p_yellow)" stroke="#111" stroke-width=".8"/>
<rect x="519.2" y="285.8" width="40.1" height="6.3" fill="#000"/>
<rect x="518.6" y="285.0" width="40.1" height="6.3" fill="url(#p_red)" stroke="#111" stroke-width=".8"/>
<rect x="559.3" y="285.8" width="20.1" height="6.3" fill="#000"/>
<rect x="558.7" y="285.0" width="20.1" height="6.3" fill="url(#p_black)" stroke="#111" stroke-width=".8"/>
<rect x="579.4" y="285.8" width="20.1" height="6.3" fill="#000"/>
<rect x="578.8" y="285.0" width="20.1" height="6.3" fill="url(#p_vl)" stroke="#111" stroke-width=".8"/>
<rect x="619.5" y="285.8" width="20.1" height="6.3" fill="#000"/>
<rect x="618.9" y="285.0" width="20.1" height="6.3" fill="url(#p_orange)" stroke="#111" stroke-width=".8"/>
<rect x="639.6" y="285.8" width="20.1" height="6.3" fill="#000"/>
<rect x="639.0" y="285.0" width="20.1" height="6.3" fill="url(#p_lgreen)" stroke="#111" stroke-width=".8"/>
<rect x="659.6" y="285.8" width="20.1" height="6.3" fill="#000"/>
<rect x="659.0" y="285.0" width="20.1" height="6.3" fill="url(#p_pink)" stroke="#111" stroke-width=".8"/>
<rect x="679.7" y="285.8" width="20.1" height="6.3" fill="#000"/>
<rect x="679.1" y="285.0" width="20.1" height="6.3" fill="url(#p_dgreen)" stroke="#111" stroke-width=".8"/>
<rect x="699.8" y="285.8" width="40.1" height="6.3" fill="#000"/>
<rect x="699.2" y="285.0" width="40.1" height="6.3" fill="url(#p_lblue)" stroke="#111" stroke-width=".8"/>
<rect x="739.9" y="285.8" width="28.5" height="6.3" fill="#000"/>
<rect x="739.3" y="285.0" width="28.5" height="6.3" fill="url(#p_ox)" stroke="#111" stroke-width=".8"/>
<rect x="780.1" y="285.8" width="28.5" height="6.3" fill="#000"/>
<rect x="779.5" y="285.0" width="28.5" height="6.3" fill="url(#p_teal)" stroke="#111" stroke-width=".8"/>
<rect x="760.0" y="282.2" width="29.1" height="6.3" fill="#000"/>
<rect x="759.4" y="281.4" width="29.1" height="6.3" fill="url(#p_rx)" stroke="#111" stroke-width=".8"/>
<rect x="808.6" y="285.8" width="40.1" height="6.3" fill="#000"/>
<rect x="808.0" y="285.0" width="40.1" height="6.3" fill="url(#p_gray)" stroke="#111" stroke-width=".8"/>
<rect x="848.7" y="285.8" width="28.3" height="6.3" fill="#000"/>
<rect x="848.1" y="285.0" width="28.3" height="6.3" fill="url(#p_lime)" stroke="#111" stroke-width=".8"/>
<rect x="889.3" y="285.8" width="27.7" height="6.3" fill="#000"/>
<rect x="888.7" y="285.0" width="27.7" height="6.3" fill="url(#p_aqua)" stroke="#111" stroke-width=".8"/>
<rect x="868.4" y="282.2" width="28.5" height="6.3" fill="#000"/>
<rect x="867.8" y="281.4" width="28.5" height="6.3" fill="url(#p_gx)" stroke="#111" stroke-width=".8"/>
<rect x="916.9" y="285.8" width="33.7" height="6.3" fill="#000"/>
<rect x="916.3" y="285.0" width="33.7" height="6.3" fill="url(#p_bx)" stroke="#111" stroke-width=".8"/>
<path d="M598.8 288.2H616" stroke="#111" stroke-width=".8"/><path d="M615 286.1L618.4 288.2L615 290.3Z" fill="#000"/>
<path d="M438.3 278.3V285.0" stroke="#222" stroke-width=".8"/><path d="M432.3 278.8L437.5 281.2L432.3 283.6Z" fill="#22e022" stroke="#0a5a0a" stroke-width=".6"/>
<text x="436.3" y="290.6" font-size="6.6" text-anchor="end" fill="#2a2222">26</text>
<rect x="438.9" y="302.8" width="20.1" height="6.3" fill="#000"/>
<rect x="438.3" y="302.0" width="20.1" height="6.3" fill="url(#p_purple)" stroke="#111" stroke-width=".8"/>
<rect x="459.0" y="302.8" width="20.1" height="6.3" fill="#000"/>
<rect x="458.4" y="302.0" width="20.1" height="6.3" fill="url(#p_blue)" stroke="#111" stroke-width=".8"/>
<rect x="479.0" y="302.8" width="20.1" height="6.3" fill="#000"/>
<rect x="478.4" y="302.0" width="20.1" height="6.3" fill="url(#p_green)" stroke="#111" stroke-width=".8"/>
<rect x="499.1" y="302.8" width="20.1" height="6.3" fill="#000"/>
<rect x="498.5" y="302.0" width="20.1" height="6.3" fill="url(#p_yellow)" stroke="#111" stroke-width=".8"/>
<rect x="519.2" y="302.8" width="40.1" height="6.3" fill="#000"/>
<rect x="518.6" y="302.0" width="40.1" height="6.3" fill="url(#p_red)" stroke="#111" stroke-width=".8"/>
<rect x="559.3" y="302.8" width="20.1" height="6.3" fill="#000"/>
<rect x="558.7" y="302.0" width="20.1" height="6.3" fill="url(#p_black)" stroke="#111" stroke-width=".8"/>
<rect x="579.4" y="302.8" width="20.1" height="6.3" fill="#000"/>
<rect x="578.8" y="302.0" width="20.1" height="6.3" fill="url(#p_vl)" stroke="#111" stroke-width=".8"/>
<rect x="619.5" y="302.8" width="20.1" height="6.3" fill="#000"/>
<rect x="618.9" y="302.0" width="20.1" height="6.3" fill="url(#p_orange)" stroke="#111" stroke-width=".8"/>
<rect x="639.6" y="302.8" width="20.1" height="6.3" fill="#000"/>
<rect x="639.0" y="302.0" width="20.1" height="6.3" fill="url(#p_lgreen)" stroke="#111" stroke-width=".8"/>
<rect x="659.6" y="302.8" width="20.1" height="6.3" fill="#000"/>
<rect x="659.0" y="302.0" width="20.1" height="6.3" fill="url(#p_pink)" stroke="#111" stroke-width=".8"/>
<rect x="679.7" y="302.8" width="20.1" height="6.3" fill="#000"/>
<rect x="679.1" y="302.0" width="20.1" height="6.3" fill="url(#p_dgreen)" stroke="#111" stroke-width=".8"/>
<rect x="699.8" y="302.8" width="40.1" height="6.3" fill="#000"/>
<rect x="699.2" y="302.0" width="40.1" height="6.3" fill="url(#p_lblue)" stroke="#111" stroke-width=".8"/>
<rect x="739.9" y="302.8" width="28.5" height="6.3" fill="#000"/>
<rect x="739.3" y="302.0" width="28.5" height="6.3" fill="url(#p_ox)" stroke="#111" stroke-width=".8"/>
<rect x="780.1" y="302.8" width="28.5" height="6.3" fill="#000"/>
<rect x="779.5" y="302.0" width="28.5" height="6.3" fill="url(#p_teal)" stroke="#111" stroke-width=".8"/>
<rect x="760.0" y="299.2" width="29.1" height="6.3" fill="#000"/>
<rect x="759.4" y="298.4" width="29.1" height="6.3" fill="url(#p_rx)" stroke="#111" stroke-width=".8"/>
<rect x="808.6" y="302.8" width="40.1" height="6.3" fill="#000"/>
<rect x="808.0" y="302.0" width="40.1" height="6.3" fill="url(#p_gray)" stroke="#111" stroke-width=".8"/>
<rect x="848.7" y="302.8" width="28.3" height="6.3" fill="#000"/>
<rect x="848.1" y="302.0" width="28.3" height="6.3" fill="url(#p_lime)" stroke="#111" stroke-width=".8"/>
<rect x="889.3" y="302.8" width="27.7" height="6.3" fill="#000"/>
<rect x="888.7" y="302.0" width="27.7" height="6.3" fill="url(#p_aqua)" stroke="#111" stroke-width=".8"/>
<rect x="868.4" y="299.2" width="28.5" height="6.3" fill="#000"/>
<rect x="867.8" y="298.4" width="28.5" height="6.3" fill="url(#p_gx)" stroke="#111" stroke-width=".8"/>
<rect x="916.9" y="302.8" width="33.7" height="6.3" fill="#000"/>
<rect x="916.3" y="302.0" width="33.7" height="6.3" fill="url(#p_bx)" stroke="#111" stroke-width=".8"/>
<path d="M598.8 305.2H616" stroke="#111" stroke-width=".8"/><path d="M615 303.1L618.4 305.2L615 307.3Z" fill="#000"/>
<path d="M438.3 295.3V302.0" stroke="#222" stroke-width=".8"/><path d="M432.3 295.8L437.5 298.2L432.3 300.6Z" fill="#22e022" stroke="#0a5a0a" stroke-width=".6"/>
<text x="436.3" y="307.6" font-size="6.6" text-anchor="end" fill="#2a2222">29</text>
<rect x="459.0" y="319.8" width="20.1" height="6.3" fill="#000"/>
<rect x="458.4" y="319.0" width="20.1" height="6.3" fill="url(#p_purple)" stroke="#111" stroke-width=".8"/>
<rect x="479.0" y="319.8" width="20.1" height="6.3" fill="#000"/>
<rect x="478.4" y="319.0" width="20.1" height="6.3" fill="url(#p_blue)" stroke="#111" stroke-width=".8"/>
<rect x="499.1" y="319.8" width="20.1" height="6.3" fill="#000"/>
<rect x="498.5" y="319.0" width="20.1" height="6.3" fill="url(#p_green)" stroke="#111" stroke-width=".8"/>
<rect x="519.2" y="319.8" width="20.1" height="6.3" fill="#000"/>
<rect x="518.6" y="319.0" width="20.1" height="6.3" fill="url(#p_yellow)" stroke="#111" stroke-width=".8"/>
<rect x="539.2" y="319.8" width="40.1" height="6.3" fill="#000"/>
<rect x="538.6" y="319.0" width="40.1" height="6.3" fill="url(#p_red)" stroke="#111" stroke-width=".8"/>
<rect x="579.4" y="319.8" width="20.1" height="6.3" fill="#000"/>
<rect x="578.8" y="319.0" width="20.1" height="6.3" fill="url(#p_black)" stroke="#111" stroke-width=".8"/>
<rect x="619.5" y="319.8" width="20.1" height="6.3" fill="#000"/>
<rect x="618.9" y="319.0" width="20.1" height="6.3" fill="url(#p_vl)" stroke="#111" stroke-width=".8"/>
<rect x="639.6" y="319.8" width="20.1" height="6.3" fill="#000"/>
<rect x="639.0" y="319.0" width="20.1" height="6.3" fill="url(#p_orange)" stroke="#111" stroke-width=".8"/>
<rect x="659.6" y="319.8" width="20.1" height="6.3" fill="#000"/>
<rect x="659.0" y="319.0" width="20.1" height="6.3" fill="url(#p_lgreen)" stroke="#111" stroke-width=".8"/>
<rect x="679.7" y="319.8" width="20.1" height="6.3" fill="#000"/>
<rect x="679.1" y="319.0" width="20.1" height="6.3" fill="url(#p_pink)" stroke="#111" stroke-width=".8"/>
<rect x="699.8" y="319.8" width="20.1" height="6.3" fill="#000"/>
<rect x="699.2" y="319.0" width="20.1" height="6.3" fill="url(#p_dgreen)" stroke="#111" stroke-width=".8"/>
<rect x="719.9" y="319.8" width="40.1" height="6.3" fill="#000"/>
<rect x="719.3" y="319.0" width="40.1" height="6.3" fill="url(#p_lblue)" stroke="#111" stroke-width=".8"/>
<rect x="760.0" y="319.8" width="28.5" height="6.3" fill="#000"/>
<rect x="759.4" y="319.0" width="28.5" height="6.3" fill="url(#p_ox)" stroke="#111" stroke-width=".8"/>
<rect x="800.1" y="319.8" width="28.5" height="6.3" fill="#000"/>
<rect x="799.5" y="319.0" width="28.5" height="6.3" fill="url(#p_teal)" stroke="#111" stroke-width=".8"/>
<rect x="780.1" y="316.2" width="29.1" height="6.3" fill="#000"/>
<rect x="779.5" y="315.4" width="29.1" height="6.3" fill="url(#p_rx)" stroke="#111" stroke-width=".8"/>
<rect x="828.6" y="319.8" width="40.1" height="6.3" fill="#000"/>
<rect x="828.0" y="319.0" width="40.1" height="6.3" fill="url(#p_gray)" stroke="#111" stroke-width=".8"/>
<rect x="868.8" y="319.8" width="28.3" height="6.3" fill="#000"/>
<rect x="868.2" y="319.0" width="28.3" height="6.3" fill="url(#p_lime)" stroke="#111" stroke-width=".8"/>
<rect x="909.3" y="319.8" width="27.7" height="6.3" fill="#000"/>
<rect x="908.7" y="319.0" width="27.7" height="6.3" fill="url(#p_aqua)" stroke="#111" stroke-width=".8"/>
<rect x="888.4" y="316.2" width="28.5" height="6.3" fill="#000"/>
<rect x="887.8" y="315.4" width="28.5" height="6.3" fill="url(#p_gx)" stroke="#111" stroke-width=".8"/>
<rect x="937.0" y="319.8" width="13.6" height="6.3" fill="#000"/>
<rect x="936.4" y="319.0" width="13.6" height="6.3" fill="url(#p_bx)" stroke="#111" stroke-width=".8"/>
<path d="M598.8 322.2H616" stroke="#111" stroke-width=".8"/><path d="M615 320.1L618.4 322.2L615 324.3Z" fill="#000"/>
<path d="M458.4 312.3V319.0" stroke="#222" stroke-width=".8"/><path d="M452.4 312.8L457.6 315.2L452.4 317.6Z" fill="#22e022" stroke="#0a5a0a" stroke-width=".6"/>
<text x="456.4" y="324.6" font-size="6.6" text-anchor="end" fill="#2a2222">28</text>
<rect x="459.0" y="336.8" width="20.1" height="6.3" fill="#000"/>
<rect x="458.4" y="336.0" width="20.1" height="6.3" fill="url(#p_purple)" stroke="#111" stroke-width=".8"/>
<rect x="479.0" y="336.8" width="20.1" height="6.3" fill="#000"/>
<rect x="478.4" y="336.0" width="20.1" height="6.3" fill="url(#p_blue)" stroke="#111" stroke-width=".8"/>
<rect x="499.1" y="336.8" width="20.1" height="6.3" fill="#000"/>
<rect x="498.5" y="336.0" width="20.1" height="6.3" fill="url(#p_green)" stroke="#111" stroke-width=".8"/>
<rect x="519.2" y="336.8" width="20.1" height="6.3" fill="#000"/>
<rect x="518.6" y="336.0" width="20.1" height="6.3" fill="url(#p_yellow)" stroke="#111" stroke-width=".8"/>
<rect x="539.2" y="336.8" width="40.1" height="6.3" fill="#000"/>
<rect x="538.6" y="336.0" width="40.1" height="6.3" fill="url(#p_red)" stroke="#111" stroke-width=".8"/>
<rect x="579.4" y="336.8" width="20.1" height="6.3" fill="#000"/>
<rect x="578.8" y="336.0" width="20.1" height="6.3" fill="url(#p_black)" stroke="#111" stroke-width=".8"/>
<rect x="619.5" y="336.8" width="20.1" height="6.3" fill="#000"/>
<rect x="618.9" y="336.0" width="20.1" height="6.3" fill="url(#p_vl)" stroke="#111" stroke-width=".8"/>
<rect x="639.6" y="336.8" width="20.1" height="6.3" fill="#000"/>
<rect x="639.0" y="336.0" width="20.1" height="6.3" fill="url(#p_orange)" stroke="#111" stroke-width=".8"/>
<rect x="659.6" y="336.8" width="20.1" height="6.3" fill="#000"/>
<rect x="659.0" y="336.0" width="20.1" height="6.3" fill="url(#p_lgreen)" stroke="#111" stroke-width=".8"/>
<rect x="679.7" y="336.8" width="20.1" height="6.3" fill="#000"/>
<rect x="679.1" y="336.0" width="20.1" height="6.3" fill="url(#p_pink)" stroke="#111" stroke-width=".8"/>
<rect x="699.8" y="336.8" width="20.1" height="6.3" fill="#000"/>
<rect x="699.2" y="336.0" width="20.1" height="6.3" fill="url(#p_dgreen)" stroke="#111" stroke-width=".8"/>
<rect x="719.9" y="336.8" width="40.1" height="6.3" fill="#000"/>
<rect x="719.3" y="336.0" width="40.1" height="6.3" fill="url(#p_lblue)" stroke="#111" stroke-width=".8"/>
<rect x="760.0" y="336.8" width="28.5" height="6.3" fill="#000"/>
<rect x="759.4" y="336.0" width="28.5" height="6.3" fill="url(#p_ox)" stroke="#111" stroke-width=".8"/>
<rect x="800.1" y="336.8" width="28.5" height="6.3" fill="#000"/>
<rect x="799.5" y="336.0" width="28.5" height="6.3" fill="url(#p_teal)" stroke="#111" stroke-width=".8"/>
<rect x="780.1" y="333.2" width="29.1" height="6.3" fill="#000"/>
<rect x="779.5" y="332.4" width="29.1" height="6.3" fill="url(#p_rx)" stroke="#111" stroke-width=".8"/>
<rect x="828.6" y="336.8" width="40.1" height="6.3" fill="#000"/>
<rect x="828.0" y="336.0" width="40.1" height="6.3" fill="url(#p_gray)" stroke="#111" stroke-width=".8"/>
<rect x="868.8" y="336.8" width="28.3" height="6.3" fill="#000"/>
<rect x="868.2" y="336.0" width="28.3" height="6.3" fill="url(#p_lime)" stroke="#111" stroke-width=".8"/>
<rect x="909.3" y="336.8" width="27.7" height="6.3" fill="#000"/>
<rect x="908.7" y="336.0" width="27.7" height="6.3" fill="url(#p_aqua)" stroke="#111" stroke-width=".8"/>
<rect x="888.4" y="333.2" width="28.5" height="6.3" fill="#000"/>
<rect x="887.8" y="332.4" width="28.5" height="6.3" fill="url(#p_gx)" stroke="#111" stroke-width=".8"/>
<rect x="937.0" y="336.8" width="13.6" height="6.3" fill="#000"/>
<rect x="936.4" y="336.0" width="13.6" height="6.3" fill="url(#p_bx)" stroke="#111" stroke-width=".8"/>
<path d="M598.8 339.2H616" stroke="#111" stroke-width=".8"/><path d="M615 337.1L618.4 339.2L615 341.3Z" fill="#000"/>
<path d="M458.4 329.3V336.0" stroke="#222" stroke-width=".8"/><path d="M452.4 329.8L457.6 332.2L452.4 334.6Z" fill="#22e022" stroke="#0a5a0a" stroke-width=".6"/>
<text x="456.4" y="341.6" font-size="6.6" text-anchor="end" fill="#2a2222">31</text>
<path d="M438.6 111.5L438.6 128.5L418.2 128.5L418.2 145.5L446.3 145.5L446.3 162.5L402.0 162.5L402.0 179.5L458.3 179.5L458.3 196.5L438.4 196.5L438.4 213.5L438.6 213.5L438.6 226.5L398.1 226.5L398.1 243.5L418.2 243.5L418.2 260.5L438.4 260.5L438.4 277.5L438.3 277.5L438.3 311.5L438.6 311.5L438.6 338.0" stroke="#000080" stroke-width="1.8" fill="none" stroke-linejoin="round"/>
<rect x="374.5" y="285" width="54.5" height="37.5" fill="#fff" stroke="#3a3a3a" stroke-width="1"/>
<text x="401.7" y="296.0" font-size="8.3" font-weight="bold" text-anchor="middle" fill="#2a2420">Progress to:</text>
<text x="401.7" y="307.2" font-size="8.3" font-weight="bold" text-anchor="middle" fill="#2a2420">End of Jan</text>
<text x="401.7" y="318.4" font-size="8.3" font-weight="bold" text-anchor="middle" fill="#2a2420">(week 4)</text>
</svg>
<div class="a" style="left:947px;top:87px;width:12px;height:251px;background:#f0f0f0"></div>
<div class="a" style="left:948px;top:98px;width:9.5px;height:81px;background:linear-gradient(90deg,#fafafa,#e9e9e9 50%,#cfcfcf);border:1px solid #bcbcbc;border-radius:2px"></div>
<svg class="a" style="left:950px;top:135px" width="6" height="6"><path d="M.5 1H5.5M.5 3H5.5M.5 5H5.5" stroke="#777" stroke-width=".55"/></svg>
<svg class="a" style="left:950px;top:90px" width="6" height="4"><path d="M1 3.5L3 1L5 3.5Z" fill="#666"/></svg>
<svg class="a" style="left:950px;top:330px" width="6" height="4"><path d="M1 .5L3 3L5 .5Z" fill="#666"/></svg>
<div class="a" style="left:958.5px;top:85px;width:1.5px;height:385px;background:#f6f6f6"></div>
<div class="a" style="left:4px;top:337px;width:955px;height:3px;background:linear-gradient(#8a8a8a 0,#4a4a4a 40%,#d8d8d8 55%,#fafafa)"></div>
<div class="a" style="left:4px;top:340px;width:955px;height:58.5px;background:#fff"></div>
<div class="a" style="left:4px;top:398px;width:955px;height:2px;background:linear-gradient(#7a7a7a,#d0d0d0)"></div>
<div class="a" style="left:4px;top:400px;width:955px;height:56.5px;background:#fff"></div>
<div class="a" style="left:4px;top:456px;width:336px;height:1px;background:#555"></div>
<div class="a" style="left:4px;top:340px;width:285.5px;height:14px;background:linear-gradient(#f7f9fc,#e6ecf5);border-right:1px solid #b9c4d6;border-bottom:1px solid #b9c4d6"></div>
<div class="a" style="left:4.5px;top:340.5px;width:8px;height:12.5px;background:#fff;border:1px solid #c9d2e0"></div>
<div class="t c " style="left:8.5px;top:342px;color:#222">1</div>
<div class="a" style="left:103.5px;top:341px;width:1px;height:12px;background:#dfe5ee"></div>
<div class="a" style="left:111.5px;top:341px;width:1px;height:12px;background:#c5cedc"></div>
<div class="a" style="left:203.5px;top:341px;width:1px;height:12px;background:#c5cedc"></div>
<svg class="a" style="left:105.5px;top:346.3px" width="4" height="2.4" viewBox="0 0 4 2.4"><path d="M0 0H4L2 2.4Z" fill="#222"/></svg>
<svg class="a" style="left:196px;top:346.3px" width="4" height="2.4" viewBox="0 0 4 2.4"><path d="M0 0H4L2 2.4Z" fill="#222"/></svg>
<svg class="a" style="left:114.5px;top:342.5px" width="8.5" height="9" viewBox="0 0 8.5 9"><rect x=".3" y="1" width="2.2" height="8" fill="#c81e1e"/><rect x="3" y="3.2" width="2.2" height="5.8" fill="#1e8a2e"/><rect x="5.8" y="0" width="2.2" height="9" fill="#1a3fa8"/></svg>
<svg class="a" style="left:207px;top:342.3px" width="10.5" height="10.5" viewBox="0 0 10.5 10.5"><rect x=".5" y=".5" width="7.6" height="8.2" fill="#bcd6f6" stroke="#2a62c0" stroke-width="1"/><rect x="1.6" y="2" width="1.4" height="3" fill="#d81e1e"/><rect x="3.3" y="2.6" width="1.4" height="2.4" fill="#1e9a2e"/><rect x="5" y="1.6" width="1.4" height="3.4" fill="#1a48b8"/><rect x="5.6" y="6.6" width="3.6" height="3.4" fill="#9cc4f4" stroke="#2a62c0" stroke-width=".6"/><path d="M5.4 6.4L7 8.6L10 4.4" stroke="#e01818" stroke-width="1.3" fill="none"/></svg>
<svg class="a" style="left:220.5px;top:342.1px" width="10.5" height="10.5" viewBox="0 0 10.5 10.5"><rect x=".6" y=".6" width="1.7" height="5" fill="#d81e1e"/><rect x="2.6" y="2" width="1.7" height="4" fill="#1e9a2e"/><rect x="4.6" y=".8" width="1.7" height="4.4" fill="#1a48b8"/><rect x="4.6" y="5" width="5.2" height="5" fill="#bcd6f6" stroke="#2a62c0" stroke-width=".9"/><path d="M5.6 6.8L7.2 9L10.2 4.6" stroke="#e01818" stroke-width="1.3" fill="none"/></svg>
<div class="a" style="left:233.5px;top:341.3px;width:1px;height:12px;background:#a9b8cf"></div>
<svg class="a" style="left:237.3px;top:342.5px" width="10" height="9.8" viewBox="0 0 10 9.8"><rect x=".6" y=".6" width="8.8" height="8.6" rx=".8" fill="#f4f8ff" stroke="#3a66c8" stroke-width="1.2"/><rect x="1" y="3.7" width="8" height="2.3" fill="#3a66c8"/><rect x="1" y="1" width="8" height="1" fill="#7a9ae0"/></svg>
<svg class="a" style="left:250.3px;top:342.1px" width="10.6" height="10.4" viewBox="0 0 10.6 10.4"><rect x=".5" y=".5" width="9.6" height="9.4" fill="#b6ccf0" stroke="#5a78c0" stroke-width=".9"/><rect x="1.9" y="1.9" width="6.8" height="6.6" fill="#eaf2ff" stroke="#2448a8" stroke-width="1"/><rect x="3.1" y="4.4" width="1.7" height="3.6" fill="#d81e1e"/><rect x="5.6" y="3.4" width="1.7" height="4.6" fill="#1e9a2e"/></svg>
<svg class="a" style="left:264.3px;top:342.3px" width="9.4" height="10" viewBox="0 0 9.4 10"><rect x=".3" y="1" width="2.6" height="8.6" fill="#d81e1e"/><rect x="3.3" y="3" width="2.6" height="6.6" fill="#1e9a2e"/><rect x="6.3" y="1.6" width="2.6" height="8" fill="#1a48b8"/></svg>
<svg class="a" style="left:277px;top:341.7px" width="11" height="11" viewBox="0 0 11 11"><rect x=".4" y="5.4" width="2" height="5.2" fill="#d81e1e"/><rect x="2.8" y="6.6" width="2" height="4" fill="#1e9a2e"/><rect x="5.2" y="4.8" width="2" height="5.8" fill="#1a48b8"/><path d="M5.8 .8L10.2 5.2M10.2 .8L5.8 5.2" stroke="#e01818" stroke-width="1.6"/></svg>
<div class="a" style="left:4px;top:400.5px;width:285.5px;height:14px;background:linear-gradient(#f7f9fc,#e6ecf5);border-right:1px solid #b9c4d6;border-bottom:1px solid #b9c4d6"></div>
<div class="a" style="left:4.5px;top:401.0px;width:8px;height:12.5px;background:#fff;border:1px solid #c9d2e0"></div>
<div class="t c " style="left:8.5px;top:402.5px;color:#222">2</div>
<div class="a" style="left:103.5px;top:401.5px;width:1px;height:12px;background:#dfe5ee"></div>
<div class="a" style="left:111.5px;top:401.5px;width:1px;height:12px;background:#c5cedc"></div>
<div class="a" style="left:203.5px;top:401.5px;width:1px;height:12px;background:#c5cedc"></div>
<svg class="a" style="left:105.5px;top:406.8px" width="4" height="2.4" viewBox="0 0 4 2.4"><path d="M0 0H4L2 2.4Z" fill="#222"/></svg>
<svg class="a" style="left:196px;top:406.8px" width="4" height="2.4" viewBox="0 0 4 2.4"><path d="M0 0H4L2 2.4Z" fill="#222"/></svg>
<svg class="a" style="left:114.5px;top:403.0px" width="8.5" height="9" viewBox="0 0 8.5 9"><rect x=".3" y="1" width="2.2" height="8" fill="#c81e1e"/><rect x="3" y="3.2" width="2.2" height="5.8" fill="#1e8a2e"/><rect x="5.8" y="0" width="2.2" height="9" fill="#1a3fa8"/></svg>
<svg class="a" style="left:207px;top:402.8px" width="10.5" height="10.5" viewBox="0 0 10.5 10.5"><rect x=".5" y=".5" width="7.6" height="8.2" fill="#bcd6f6" stroke="#2a62c0" stroke-width="1"/><rect x="1.6" y="2" width="1.4" height="3" fill="#d81e1e"/><rect x="3.3" y="2.6" width="1.4" height="2.4" fill="#1e9a2e"/><rect x="5" y="1.6" width="1.4" height="3.4" fill="#1a48b8"/><rect x="5.6" y="6.6" width="3.6" height="3.4" fill="#9cc4f4" stroke="#2a62c0" stroke-width=".6"/><path d="M5.4 6.4L7 8.6L10 4.4" stroke="#e01818" stroke-width="1.3" fill="none"/></svg>
<svg class="a" style="left:220.5px;top:402.6px" width="10.5" height="10.5" viewBox="0 0 10.5 10.5"><rect x=".6" y=".6" width="1.7" height="5" fill="#d81e1e"/><rect x="2.6" y="2" width="1.7" height="4" fill="#1e9a2e"/><rect x="4.6" y=".8" width="1.7" height="4.4" fill="#1a48b8"/><rect x="4.6" y="5" width="5.2" height="5" fill="#bcd6f6" stroke="#2a62c0" stroke-width=".9"/><path d="M5.6 6.8L7.2 9L10.2 4.6" stroke="#e01818" stroke-width="1.3" fill="none"/></svg>
<div class="a" style="left:233.5px;top:401.8px;width:1px;height:12px;background:#a9b8cf"></div>
<svg class="a" style="left:237.3px;top:403.0px" width="10" height="9.8" viewBox="0 0 10 9.8"><rect x=".6" y=".6" width="8.8" height="8.6" rx=".8" fill="#f4f8ff" stroke="#3a66c8" stroke-width="1.2"/><rect x="1" y="3.7" width="8" height="2.3" fill="#3a66c8"/><rect x="1" y="1" width="8" height="1" fill="#7a9ae0"/></svg>
<svg class="a" style="left:250.3px;top:402.6px" width="10.6" height="10.4" viewBox="0 0 10.6 10.4"><rect x=".5" y=".5" width="9.6" height="9.4" fill="#b6ccf0" stroke="#5a78c0" stroke-width=".9"/><rect x="1.9" y="1.9" width="6.8" height="6.6" fill="#eaf2ff" stroke="#2448a8" stroke-width="1"/><rect x="3.1" y="4.4" width="1.7" height="3.6" fill="#d81e1e"/><rect x="5.6" y="3.4" width="1.7" height="4.6" fill="#1e9a2e"/></svg>
<svg class="a" style="left:264.3px;top:402.8px" width="9.4" height="10" viewBox="0 0 9.4 10"><rect x=".3" y="1" width="2.6" height="8.6" fill="#d81e1e"/><rect x="3.3" y="3" width="2.6" height="6.6" fill="#1e9a2e"/><rect x="6.3" y="1.6" width="2.6" height="8" fill="#1a48b8"/></svg>
<svg class="a" style="left:277px;top:402.2px" width="11" height="11" viewBox="0 0 11 11"><rect x=".4" y="5.4" width="2" height="5.2" fill="#d81e1e"/><rect x="2.8" y="6.6" width="2" height="4" fill="#1e9a2e"/><rect x="5.2" y="4.8" width="2" height="5.8" fill="#1a48b8"/><path d="M5.8 .8L10.2 5.2M10.2 .8L5.8 5.2" stroke="#e01818" stroke-width="1.6"/></svg>
<svg class="a" style="left:18.5px;top:341.5px" width="9" height="11" viewBox="0 0 9 11"><circle cx="4.5" cy="3.2" r="2.3" fill="#f0b070" stroke="#a8641e" stroke-width=".5"/><path d="M2.2 2.6Q4.5 -.4 6.8 2.6Q4.5 1.6 2.2 2.6" fill="#b86a14"/><path d="M1 10.5Q1 5.8 4.5 5.8Q8 5.8 8 10.5Z" fill="#3d78c8" stroke="#2a55a0" stroke-width=".5"/></svg>
<div class="t " style="left:28.7px;top:342.9px;color:#1a2a44">Bricklayers, Carpenters,</div>
<div class="t " style="left:124.7px;top:342.9px;color:#1a2a44">Manpower Required</div>
<svg class="a" style="left:17.5px;top:402.5px" width="11" height="10" viewBox="0 0 11 10"><path d="M1 4L5.5 1.2L10 4V8.5L5.5 9.8L1 8.5Z" fill="#c8a860" stroke="#7a6230" stroke-width=".6"/><path d="M1 4L5.5 5.5L10 4M5.5 5.5V9.8" stroke="#7a6230" stroke-width=".5" fill="none"/><path d="M2 2.8L5.5 .4L9 2.8L5.5 4Z" fill="#8a9ab8" stroke="#56657f" stroke-width=".4"/></svg>
<div class="t " style="left:29px;top:403.4px;color:#1a2a44">Project Costs Folder</div>
<div class="t " style="left:124.7px;top:403.4px;color:#1a2a44">Monthly Costs</div>
<svg class="a" style="left:4px;top:355px" width="334" height="24" viewBox="4 355 334 24" font-family="Liberation Sans,sans-serif"><defs><pattern id="l_red" width="5.3" height="5" patternUnits="userSpaceOnUse"><rect width="5.3" height="5" fill="#ff0a0a"/><path d="M0 1.25H5.3M0 3.75H5.3M1.3 1.25V3.75M3.95 -1V1.25M3.95 3.75V6" stroke="#fff" stroke-width=".52" fill="none"/></pattern><pattern id="l_grn" width="2" height="2" patternUnits="userSpaceOnUse"><rect width="2" height="2" fill="#22d400"/><rect width="1" height="1" fill="#0a8a00"/><rect x="1" y="1" width="1" height="1" fill="#0a8a00"/></pattern><pattern id="l_yel" width="6" height="6" patternUnits="userSpaceOnUse"><rect width="6" height="6" fill="#ffff00"/><path d="M0 0Q3 1 3 3T6 6M-3 3Q0 4 0 6M3 0Q6 1 6 3" stroke="#fffff0" stroke-width=".9" fill="none"/></pattern></defs><rect x="5.3" y="357.6" width="25" height="8" fill="url(#l_red)" stroke="#555" stroke-width=".8"/><rect x="5.3" y="367.6" width="25" height="8.4" fill="#fff" stroke="#555" stroke-width=".8"/><path d="M7.3 371.8H28.3" stroke="#cfcfcf" stroke-width="1.4"/><text x="32.3" y="364.2" font-size="6.5" fill="#222">Required - Bricklayers</text><text x="32.3" y="374.3" font-size="6.5" fill="#222">Total - Bricklayers</text><rect x="113.3" y="357.6" width="25" height="8" fill="url(#l_grn)" stroke="#555" stroke-width=".8"/><rect x="113.3" y="367.6" width="25" height="8.4" fill="#fff" stroke="#555" stroke-width=".8"/><path d="M115.3 371.8H136.3" stroke="#cfcfcf" stroke-width="1.4"/><text x="140.3" y="364.2" font-size="6.5" fill="#222">Required - Carpenters</text><text x="140.3" y="374.3" font-size="6.5" fill="#222">Total - Carpenters</text><rect x="221.3" y="357.6" width="25" height="8" fill="url(#l_yel)" stroke="#555" stroke-width=".8"/><rect x="221.3" y="367.6" width="25" height="8.4" fill="#fff" stroke="#555" stroke-width=".8"/><path d="M223.3 371.8H244.3" stroke="#cfcfcf" stroke-width="1.4"/><text x="248.3" y="364.2" font-size="6.5" fill="#222">Required - Plasterers</text><text x="248.3" y="374.3" font-size="6.5" fill="#222">Total - Plasterers</text></svg>
<div class="t tb" style="right:621px;top:338.5px;font-size:6.4px;color:#222">40-</div>
<div class="t tb" style="right:621px;top:364px;font-size:6.4px;color:#222">20-</div>
<div class="t tb" style="right:621px;top:389.8px;font-size:6.4px;color:#222">0-</div>
<div class="t tb" style="right:621px;top:405.8px;font-size:6.4px;color:#222">400000-</div>
<div class="t tb" style="right:621px;top:422.5px;font-size:6.4px;color:#222">200000-</div>
<div class="t tb" style="right:621px;top:438.8px;font-size:6.4px;color:#222">0-</div>
<div class="t tb" style="right:621px;top:447px;font-size:6.4px;color:#222">Monthly Cost</div>
<svg class="a" style="left:340px;top:340px" width="607" height="117" viewBox="340 340 607 117" font-family="Liberation Sans,sans-serif">
<defs><pattern id="h_red" width="5.3" height="5" patternUnits="userSpaceOnUse"><rect width="5.3" height="5" fill="#ff0a0a"/><path d="M0 1.25H5.3M0 3.75H5.3M1.3 1.25V3.75M3.95 -1V1.25M3.95 3.75V6" stroke="#fff" stroke-width=".52" fill="none"/></pattern><pattern id="h_grn" width="2" height="2" patternUnits="userSpaceOnUse"><rect width="2" height="2" fill="#22d400"/><rect width="1" height="1" fill="#0a8a00"/><rect x="1" y="1" width="1" height="1" fill="#0a8a00"/></pattern><pattern id="h_yel" width="6" height="6" patternUnits="userSpaceOnUse"><rect width="6" height="6" fill="#ffff00"/><path d="M0 0Q3 1 3 3T6 6M-3 3Q0 4 0 6M3 0Q6 1 6 3" stroke="#fffff0" stroke-width=".9" fill="none"/></pattern><pattern id="h_navy" width="2" height="2" patternUnits="userSpaceOnUse"><rect width="2" height="2" fill="#000088"/><rect width="1" height="1" fill="#2a2ab0"/></pattern></defs>
<rect x="340" y="340" width="607" height="117" fill="#fff"/>
<path d="M340 343.2H947" stroke="#555" stroke-width="1"/>
<path d="M357.5 395V383.3H458.5M357.5 387.3H440M357.5 391.2H440" stroke="#777" stroke-width=".8" fill="none"/>
<rect x="438.4" y="387.7" width="20.3" height="7.3" fill="url(#h_red)"/>
<rect x="458.4" y="380" width="20.3" height="15.0" fill="url(#h_red)"/>
<rect x="478.4" y="371.7" width="20.5" height="23.3" fill="url(#h_red)"/>
<rect x="498.6" y="364.3" width="21.3" height="30.7" fill="url(#h_red)"/>
<rect x="519.6" y="356.7" width="19.7" height="38.3" fill="url(#h_red)"/>
<rect x="539" y="351.7" width="20.0" height="43.3" fill="url(#h_red)"/>
<rect x="558.7" y="350" width="19.4" height="45.0" fill="url(#h_red)"/>
<rect x="577.8" y="353.3" width="21.1" height="41.7" fill="url(#h_red)"/>
<rect x="619" y="357.7" width="19.8" height="37.3" fill="url(#h_red)"/>
<rect x="638.5" y="362" width="20.3" height="33.0" fill="url(#h_red)"/>
<rect x="658.5" y="366" width="20.3" height="29.0" fill="url(#h_red)"/>
<rect x="678.5" y="368.3" width="21.1" height="26.7" fill="url(#h_red)"/>
<rect x="699.3" y="370" width="99.7" height="25.0" fill="url(#h_red)"/>
<rect x="798.7" y="374.3" width="20.3" height="20.7" fill="url(#h_red)"/>
<rect x="748.3" y="379.3" width="99.2" height="15.7" fill="url(#h_yel)"/>
<rect x="847.5" y="383.3" width="20.5" height="11.7" fill="url(#h_yel)"/>
<rect x="868" y="386.2" width="11.0" height="8.8" fill="url(#h_yel)"/>
<rect x="727.3" y="387.6" width="219.7" height="7.4" fill="url(#h_yel)"/>
<rect x="818.7" y="378.3" width="29" height="1.4" fill="#ff5a3a"/><rect x="847.5" y="382.4" width="20" height="1.2" fill="#ff5a3a"/><rect x="868" y="385.5" width="11" height="1" fill="#ff6a4a"/>
<rect x="578.3" y="391.7" width="20.3" height="3.3" fill="url(#h_grn)"/>
<rect x="619" y="391.7" width="39.5" height="3.3" fill="url(#h_grn)"/>
<rect x="658.5" y="388.3" width="68.8" height="6.7" fill="url(#h_grn)"/>
<path d="M438.4 387.3H598.6M619 387.3H947M458.4 383.6H598.6M619 383.6H947M438.4 391.2H598.6M619 391.2H660" stroke="#5a1a1a" stroke-opacity=".5" stroke-width=".7" fill="none"/>
<path d="M340 369H947" stroke="#4a4a4a" stroke-opacity=".62" stroke-width="1.1"/>
<path d="M340 395.3H947" stroke="#555" stroke-width="1"/>
<path d="M340 398.8H947" stroke="#777" stroke-width=".9"/>
<path d="M340 410.8H947" stroke="#9a9a9a" stroke-width="1"/>
<rect x="438.4" y="427.3" width="84.0" height="16.2" fill="url(#h_navy)"/>
<rect x="522.4" y="406" width="93.2" height="37.5" fill="url(#h_navy)"/>
<rect x="615.6" y="408.3" width="83.7" height="35.2" fill="url(#h_navy)"/>
<rect x="699.3" y="408.3" width="88.1" height="35.2" fill="url(#h_navy)"/>
<rect x="787.4" y="412.3" width="89.1" height="31.2" fill="url(#h_navy)"/>
<rect x="876.5" y="416" width="70.5" height="27.5" fill="url(#h_navy)"/>
<path d="M340 427.3H438M438 427.3H947" stroke="#333" stroke-opacity=".55" stroke-width=".8"/>
<path d="M340 443.6H947" stroke="#555" stroke-width="1"/>
<path d="M340 446.6H947" stroke="#333" stroke-width=".9"/>
<path d="M340 456.5H947" stroke="#333" stroke-width=".9"/>
<text x="437.59999999999997" y="454.3" font-size="6.4" text-anchor="end" fill="#222">4030</text>
<text x="521.6" y="454.3" font-size="6.4" text-anchor="end" fill="#222">200770</text>
<text x="614.8000000000001" y="454.3" font-size="6.4" text-anchor="end" fill="#222">461385</text>
<text x="698.5" y="454.3" font-size="6.4" text-anchor="end" fill="#222">432055</text>
<text x="786.6" y="454.3" font-size="6.4" text-anchor="end" fill="#222">429443</text>
<text x="875.7" y="454.3" font-size="6.4" text-anchor="end" fill="#222">387750</text>
<text x="939" y="454.3" font-size="6.4" fill="#222">336420</text>
<path d="M353.5 447V456M438.4 447V456M522.4 447V456M615.6 447V456M699.3 447V456M787.4 447V456M876.5 447V456" stroke="#333" stroke-width=".9"/>
<path d="M438.4 340V447" stroke="#2222ee" stroke-width="1" stroke-dasharray="5 2.5 1 2.5"/>
<path d="M522.4 340V447" stroke="#2222ee" stroke-width="1" stroke-dasharray="5 2.5 1 2.5"/>
<path d="M615.6 340V447" stroke="#2222ee" stroke-width="1" stroke-dasharray="5 2.5 1 2.5"/>
<path d="M699.3 340V447" stroke="#2222ee" stroke-width="1" stroke-dasharray="5 2.5 1 2.5"/>
<path d="M787.4 340V447" stroke="#2222ee" stroke-width="1" stroke-dasharray="5 2.5 1 2.5"/>
<path d="M876.5 340V447" stroke="#2222ee" stroke-width="1" stroke-dasharray="5 2.5 1 2.5"/>
</svg>
<div class="a" style="left:947px;top:340px;width:12px;height:117px;background:#f0f0f0"></div>
<div class="a" style="left:948px;top:350px;width:9.5px;height:49px;background:linear-gradient(90deg,#fafafa,#e9e9e9 50%,#cfcfcf);border:1px solid #bcbcbc;border-radius:2px"></div>
<svg class="a" style="left:950px;top:371px" width="6" height="6"><path d="M.5 1H5.5M.5 3H5.5M.5 5H5.5" stroke="#777" stroke-width=".55"/></svg>
<svg class="a" style="left:950px;top:343px" width="6" height="4"><path d="M1 3.5L3 1L5 3.5Z" fill="#666"/></svg>
<svg class="a" style="left:950px;top:451px" width="6" height="4"><path d="M1 .5L3 3L5 .5Z" fill="#666"/></svg>
<div class="a" style="left:4px;top:457px;width:955px;height:13px;background:#f0f0f0"></div>
<div class="a" style="left:16px;top:458px;width:309px;height:11px;background:linear-gradient(#f6f6f6,#dadada);border:1px solid #b4b4b4;border-radius:2.5px"></div>
<svg class="a" style="left:167.5px;top:461px" width="6" height="5"><path d="M1 .5V4.5M3 .5V4.5M5 .5V4.5" stroke="#666" stroke-width=".6"/></svg>
<svg class="a" style="left:8px;top:461px" width="3" height="5"><path d="M3 0L0 2.5L3 5Z" fill="#555"/></svg>
<svg class="a" style="left:331.5px;top:461px" width="3" height="5"><path d="M0 0L3 2.5L0 5Z" fill="#555"/></svg>
<div class="a" style="left:337px;top:457px;width:3px;height:13px;background:linear-gradient(90deg,#9aa4b5,#e6ebf2 50%,#c9d2df)"></div>
<svg class="a" style="left:343.5px;top:461px" width="3" height="5"><path d="M3 0L0 2.5L3 5Z" fill="#555"/></svg>
<div class="a" style="left:641.5px;top:458px;width:135.5px;height:11px;background:linear-gradient(#f6f6f6,#dadada);border:1px solid #b4b4b4;border-radius:2.5px"></div>
<svg class="a" style="left:705.5px;top:461px" width="6" height="5"><path d="M1 .5V4.5M3 .5V4.5M5 .5V4.5" stroke="#666" stroke-width=".6"/></svg>
<svg class="a" style="left:940px;top:461px" width="3" height="5"><path d="M0 0L3 2.5L0 5Z" fill="#555"/></svg>
<svg class="a" style="left:947.5px;top:458px" width="11" height="11"><rect x=".5" y=".5" width="10" height="10" fill="#fff" stroke="#444" stroke-width=".9"/><path d="M2 9L9 2M9 2V6M9 2H5M2 9V5.5M2 9H5.5" stroke="#222" stroke-width=".9" fill="none"/></svg>
<div class="a" style="left:0;top:470px;width:960px;height:18px;background:linear-gradient(#dbe7f6,#d3e1f4 50%,#cddcf1);border-top:1px solid #f2f6fb"></div>
<div class="a" style="left:3.5px;top:474px;width:1.2px;height:10px;background:repeating-linear-gradient(#5a86c8 0 1.2px,transparent 1.2px 2.5px)"></div>
<div class="a" style="left:0;top:471px;width:411px;height:17px;background:linear-gradient(#e6eef9,#dbe7f6 50%,#d3e1f3)"></div>
<div class="a" style="left:7px;top:473px;width:29.5px;height:12.5px;background:#e9f0f9"></div>
<div class="t " style="left:9px;top:474.3px;color:#7f8ea6">Progress</div>
<svg class="a" style="left:38.5px;top:478.3px" width="4" height="2.4" viewBox="0 0 4 2.4"><path d="M0 0H4L2 2.4Z" fill="#9aa8be"/></svg>
<div class="a" style="left:46px;top:474px;width:1px;height:11px;background:#a9bcd8"></div>
<svg class="a" style="left:50.5px;top:474.5px" width="9" height="9" viewBox="0 0 9 9"><path d="M8.5 2.8H4.5V.8L.5 4.5L4.5 8.2V6.2H8.5Z" fill="#a9b6c9" stroke="#8a98ae" stroke-width=".6"/></svg>
<svg class="a" style="left:63px;top:474.5px" width="9" height="9" viewBox="0 0 9 9"><path d="M.5 2.8H4.5V.8L8.5 4.5L4.5 8.2V6.2H.5Z" fill="#a9b6c9" stroke="#8a98ae" stroke-width=".6"/></svg>
<div class="a" style="left:76px;top:474px;width:1px;height:11px;background:#a9bcd8"></div>
<svg class="a" style="left:80px;top:475px" width="11" height="9" viewBox="0 0 11 9"><path d="M3 1.2L5.8 4.5L3 7.8L.4 4.5Z" fill="#a9b6c9" stroke="#7f8da3" stroke-width=".6"/><path d="M10.5 .8H7V8.2H10.5" stroke="#7f8da3" fill="none" stroke-width=".9"/></svg>
<div class="a" style="left:92px;top:473px;width:59px;height:12.5px;background:#e9f0f9"></div>
<div class="t " style="left:94.5px;top:474.3px;color:#7f8ea6">Start Date</div>
<svg class="a" style="left:154px;top:478.3px" width="4" height="2.4" viewBox="0 0 4 2.4"><path d="M0 0H4L2 2.4Z" fill="#9aa8be"/></svg>
<svg class="a" style="left:162.5px;top:475px" width="11" height="9" viewBox="0 0 11 9"><path d="M3 1.2L5.8 4.5L3 7.8L.4 4.5Z" fill="#a9b6c9" stroke="#7f8da3" stroke-width=".6"/><path d="M10.5 .8H7V8.2H10.5" stroke="#7f8da3" fill="none" stroke-width=".9"/></svg>
<div class="a" style="left:177.5px;top:473px;width:53.5px;height:12.5px;background:#e9f0f9"></div>
<div class="t " style="left:180px;top:474.3px;color:#7f8ea6">Duration</div>
<svg class="a" style="left:236px;top:475px" width="11" height="9" viewBox="0 0 11 9"><path d="M8 1.2L10.6 4.5L8 7.8L5.2 4.5Z" fill="#a9b6c9" stroke="#7f8da3" stroke-width=".6"/><path d="M.5 .8H4V8.2H.5" stroke="#7f8da3" fill="none" stroke-width=".9"/></svg>
<div class="a" style="left:248.5px;top:473px;width:57.0px;height:12.5px;background:#e9f0f9"></div>
<div class="t " style="left:251px;top:474.3px;color:#7f8ea6">Finish Date</div>
<svg class="a" style="left:310.5px;top:478.3px" width="4" height="2.4" viewBox="0 0 4 2.4"><path d="M0 0H4L2 2.4Z" fill="#9aa8be"/></svg>
<svg class="a" style="left:319px;top:475px" width="11" height="9" viewBox="0 0 11 9"><path d="M8 1.2L10.6 4.5L8 7.8L5.2 4.5Z" fill="#a9b6c9" stroke="#7f8da3" stroke-width=".6"/><path d="M.5 .8H4V8.2H.5" stroke="#7f8da3" fill="none" stroke-width=".9"/></svg>
<div class="a" style="left:333.5px;top:473px;width:67.5px;height:12.5px;background:#e9f0f9"></div>
<div class="t " style="left:336px;top:474.3px;color:#7f8ea6">Library</div>
<svg class="a" style="left:405.5px;top:478.3px" width="4" height="2.4" viewBox="0 0 4 2.4"><path d="M0 0H4L2 2.4Z" fill="#9aa8be"/></svg>
</body></html>
